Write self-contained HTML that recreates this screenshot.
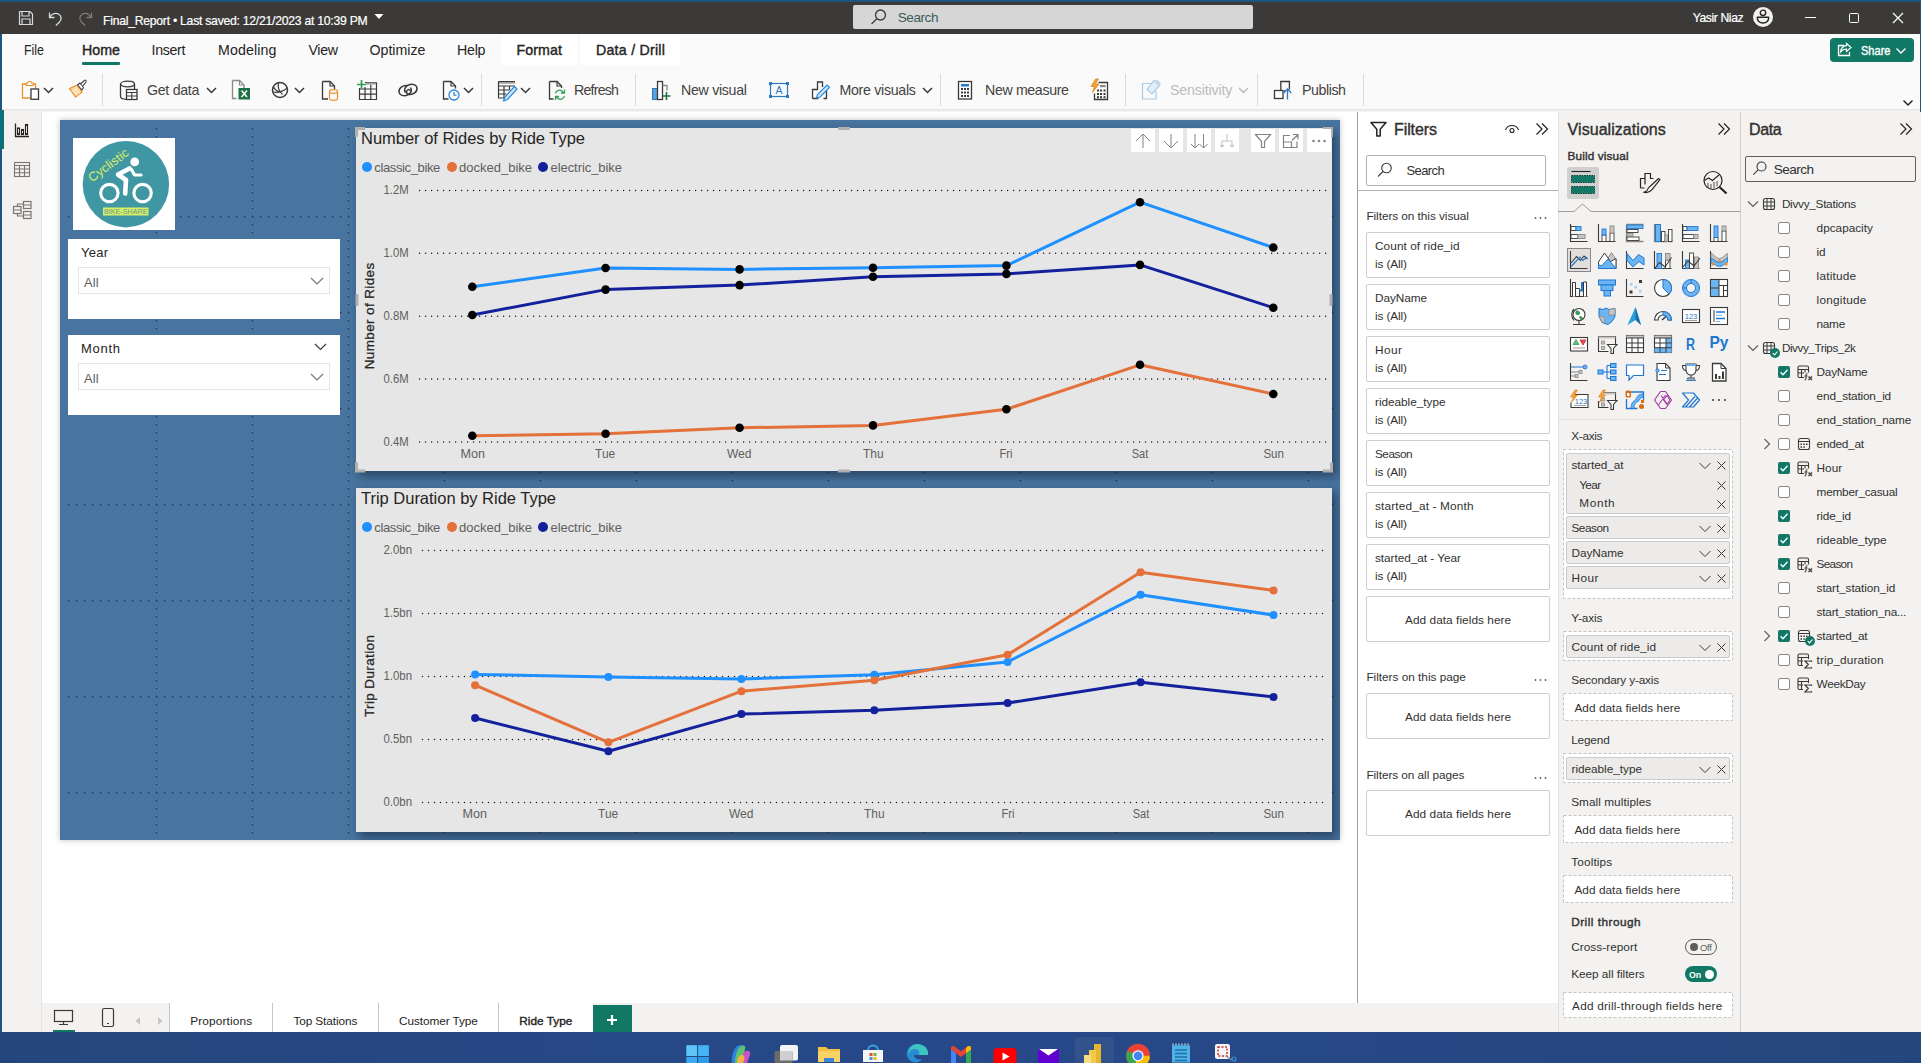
<!DOCTYPE html>
<html lang="en"><head><meta charset="utf-8"><title>Final_Report - Power BI Desktop</title>
<style>
html,body{margin:0;padding:0;background:#fff;}
body{width:1921px;height:1063px;position:relative;overflow:hidden;font-family:"Liberation Sans",sans-serif;}
.r{position:absolute;display:block;}
.t{position:absolute;white-space:nowrap;font-family:"Liberation Sans",sans-serif;}
svg{overflow:visible;}
</style></head><body>
<div class="r" style="left:0px;top:0px;width:1921px;height:1063px;background:#ffffff;"></div>
<div class="r" style="left:0px;top:0px;width:1921px;height:34px;background:#3b3a39;"></div>
<div class="r" style="left:0px;top:0px;width:1921px;height:2px;background:#1d5681;"></div>
<div class="r" style="left:0px;top:34px;width:1921px;height:76px;background:#fafafa;"></div>
<div class="r" style="left:0px;top:109px;width:1921px;height:3px;background:linear-gradient(#e3e3e3,#f6f6f6);"></div>
<div class="r" style="left:0px;top:111px;width:42px;height:921px;background:#f3f2f1;"></div>
<div class="r" style="left:41px;top:111px;width:1px;height:921px;background:#e6e5e4;"></div>
<div class="r" style="left:0px;top:34px;width:1.5px;height:998px;background:#1d5681;"></div>
<div class="r" style="left:0px;top:110px;width:4px;height:39px;background:#0f6f78;"></div>
<div class="r" style="left:42px;top:112px;width:1315px;height:891px;background:#ffffff;"></div>
<div class="t" style="left:103px;top:14px;font-size:12.2px;line-height:14px;color:#ffffff;letter-spacing:-0.249px;-webkit-text-stroke:0.2px #fff;">Final_Report • Last saved: 12/21/2023 at 10:39 PM</div>
<div class="r" style="left:853px;top:5px;width:400px;height:24px;background:#d6d6d6;border-radius:2px;"></div>
<div class="t" style="left:897.7px;top:10px;font-size:13.6px;line-height:15px;color:#3b5d58;letter-spacing:-0.462px;">Search</div>
<div class="t" style="left:1692.7px;top:11px;font-size:12.2px;line-height:14px;color:#ffffff;letter-spacing:-0.413px;-webkit-text-stroke:0.2px #fff;">Yasir Niaz</div>
<svg class="r" style="left:18px;top:10px;" width="16" height="16" viewBox="0 0 16 16"><path d="M1.5 1.5h10.5l2.5 2.5v10.5h-13z M4 1.5v4.5h7v-4.5 M4 14.5v-5.5h8v5.5" fill="none" stroke="#d8d8d8" stroke-width="1.2"/></svg>
<svg class="r" style="left:47px;top:10px;" width="18" height="16" viewBox="0 0 18 16"><path d="M2.5 2.5v5h5 M2.8 7.2c2-3.5 6-5 9-3c3 2 3 5.5 0.5 8l-3.5 3.3" fill="none" stroke="#d8d8d8" stroke-width="1.3"/></svg>
<svg class="r" style="left:76px;top:10px;" width="18" height="16" viewBox="0 0 18 16"><path d="M15.5 2.5v5h-5 M15.2 7.2c-2-3.5-6-5-9-3c-3 2-3 5.5-0.5 8l3.5 3.3" fill="none" stroke="#7d7c7b" stroke-width="1.3"/></svg>
<svg class="r" style="left:374px;top:13px;" width="10" height="8" viewBox="0 0 10 8"><path d="M0.5 1h9l-4.5 5z" fill="#ffffff"/></svg>
<svg class="r" style="left:870px;top:8px;" width="18" height="18" viewBox="0 0 18 18"><circle cx="10.5" cy="7" r="5" fill="none" stroke="#3a3a3a" stroke-width="1.3"/><path d="M7 10.5l-5.5 5.5" stroke="#3a3a3a" stroke-width="1.3"/></svg>
<svg class="r" style="left:1752px;top:6px;" width="22" height="22" viewBox="0 0 22 22"><circle cx="11" cy="11" r="10" fill="#f3f2f1"/><circle cx="11" cy="6.8" r="2.7" fill="none" stroke="#252423" stroke-width="1.4"/><path d="M5.3 11.3h11.4c0.3 3.5-2.3 5.7-5.7 5.7s-6-2.2-5.7-5.7z" fill="none" stroke="#252423" stroke-width="1.4" stroke-linejoin="round"/></svg>
<div class="r" style="left:1805px;top:17px;width:10.5px;height:1px;background:#ffffff;"></div>
<div class="r" style="left:1849px;top:13px;width:8px;height:8px;border:1px solid #ffffff;border-radius:1.5px;"></div>
<svg class="r" style="left:1892px;top:11.5px;" width="12" height="12" viewBox="0 0 12 12"><path d="M1 1l10 10M11 1l-10 10" stroke="#fff" stroke-width="1.2"/></svg>
<div class="r" style="left:1919.5px;top:2px;width:1.5px;height:1030px;background:#1d5681;"></div>
<div class="t" style="left:24px;top:42px;font-size:14.2px;line-height:16px;color:#252423;transform:scaleX(0.8748);transform-origin:0px 0;">File</div>
<div class="t" style="left:82px;top:42px;font-size:14.2px;line-height:16px;color:#252423;letter-spacing:0.029px;-webkit-text-stroke:0.4px #252423;">Home</div>
<div class="r" style="left:82px;top:62px;width:38px;height:3px;background:#117865;border-radius:1px;"></div>
<div class="t" style="left:151.5px;top:42px;font-size:14.2px;line-height:16px;color:#252423;letter-spacing:-0.3px;">Insert</div>
<div class="t" style="left:218px;top:42px;font-size:14.2px;line-height:16px;color:#252423;letter-spacing:0.121px;">Modeling</div>
<div class="t" style="left:308.5px;top:42px;font-size:14.2px;line-height:16px;color:#252423;letter-spacing:-0.343px;">View</div>
<div class="t" style="left:369.5px;top:42px;font-size:14.2px;line-height:16px;color:#252423;letter-spacing:-0.003px;">Optimize</div>
<div class="t" style="left:457px;top:42px;font-size:14.2px;line-height:16px;color:#252423;letter-spacing:-0.227px;">Help</div>
<div class="r" style="left:501px;top:34px;width:76px;height:31px;background:#ffffff;"></div>
<div class="r" style="left:580px;top:34px;width:100px;height:31px;background:#ffffff;"></div>
<div class="t" style="left:516.5px;top:42px;font-size:14.2px;line-height:16px;color:#252423;letter-spacing:0.111px;-webkit-text-stroke:0.4px #252423;">Format</div>
<div class="t" style="left:596px;top:42px;font-size:14.2px;line-height:16px;color:#252423;letter-spacing:0.244px;-webkit-text-stroke:0.4px #252423;">Data / Drill</div>
<div class="r" style="left:1830px;top:38px;width:84px;height:24px;background:#117865;border-radius:4px;"></div>
<div class="t" style="left:1861px;top:43px;font-size:13.2px;line-height:15px;color:#ffffff;transform:scaleX(0.837);transform-origin:0px 0;-webkit-text-stroke:0.4px #ffffff;">Share</div>
<svg class="r" style="left:1836px;top:42px;" width="18" height="16" viewBox="0 0 18 16"><path d="M8 3.5h-5.5v10h11v-3.5" fill="none" stroke="#fff" stroke-width="1.3"/><path d="M10.5 1.5l4.5 4-4.5 4v-2.5c-3 0-4.5 1-6 3c0.5-4 2.5-6 6-6.3z" fill="none" stroke="#fff" stroke-width="1.2"/></svg>
<svg class="r" style="left:1894.6px;top:47px;" width="12" height="8" viewBox="0 0 12 8"><path d="M1.5 1.5l4.5 4.5 4.5-4.5" fill="none" stroke="#fff" stroke-width="1.4"/></svg>
<svg class="r" style="left:1902px;top:99px;" width="12" height="8" viewBox="0 0 12 8"><path d="M1.5 1.5l4.5 4.5 4.5-4.5" fill="none" stroke="#252423" stroke-width="1.5"/></svg>
<div class="t" style="left:147px;top:82px;font-size:14.2px;line-height:16px;color:#444240;letter-spacing:-0.29px;">Get data</div>
<div class="t" style="left:574px;top:82px;font-size:14.2px;line-height:16px;color:#444240;letter-spacing:-0.783px;">Refresh</div>
<div class="t" style="left:681px;top:82px;font-size:14.2px;line-height:16px;color:#444240;letter-spacing:-0.295px;">New visual</div>
<div class="t" style="left:839.5px;top:82px;font-size:14.2px;line-height:16px;color:#444240;letter-spacing:-0.294px;">More visuals</div>
<div class="t" style="left:985px;top:82px;font-size:14.2px;line-height:16px;color:#444240;letter-spacing:-0.361px;">New measure</div>
<div class="t" style="left:1170px;top:82px;font-size:14.2px;line-height:16px;color:#bdbbb9;letter-spacing:-0.14px;">Sensitivity</div>
<div class="t" style="left:1302px;top:82px;font-size:14.2px;line-height:16px;color:#444240;letter-spacing:-0.429px;">Publish</div>
<div class="r" style="left:102px;top:74px;width:1px;height:32px;background:#dcdad8;"></div>
<div class="r" style="left:481px;top:74px;width:1px;height:32px;background:#dcdad8;"></div>
<div class="r" style="left:635px;top:74px;width:1px;height:32px;background:#dcdad8;"></div>
<div class="r" style="left:940px;top:74px;width:1px;height:32px;background:#dcdad8;"></div>
<div class="r" style="left:1125px;top:74px;width:1px;height:32px;background:#dcdad8;"></div>
<div class="r" style="left:1257px;top:74px;width:1px;height:32px;background:#dcdad8;"></div>
<div class="r" style="left:1363px;top:74px;width:1px;height:32px;background:#dcdad8;"></div>
<svg class="r" style="left:43px;top:87.3px;" width="11" height="7" viewBox="0 0 11 7"><path d="M1 1l4.5 4.5 4.5-4.5" fill="none" stroke="#3b3a39" stroke-width="1.5"/></svg>
<svg class="r" style="left:205.5px;top:87.3px;" width="11" height="7" viewBox="0 0 11 7"><path d="M1 1l4.5 4.5 4.5-4.5" fill="none" stroke="#3b3a39" stroke-width="1.5"/></svg>
<svg class="r" style="left:294px;top:87.3px;" width="11" height="7" viewBox="0 0 11 7"><path d="M1 1l4.5 4.5 4.5-4.5" fill="none" stroke="#3b3a39" stroke-width="1.5"/></svg>
<svg class="r" style="left:462.5px;top:87.3px;" width="11" height="7" viewBox="0 0 11 7"><path d="M1 1l4.5 4.5 4.5-4.5" fill="none" stroke="#3b3a39" stroke-width="1.5"/></svg>
<svg class="r" style="left:520px;top:87.3px;" width="11" height="7" viewBox="0 0 11 7"><path d="M1 1l4.5 4.5 4.5-4.5" fill="none" stroke="#3b3a39" stroke-width="1.5"/></svg>
<svg class="r" style="left:922px;top:87.3px;" width="11" height="7" viewBox="0 0 11 7"><path d="M1 1l4.5 4.5 4.5-4.5" fill="none" stroke="#3b3a39" stroke-width="1.5"/></svg>
<svg class="r" style="left:1237.5px;top:87.3px;" width="11" height="7" viewBox="0 0 11 7"><path d="M1 1l4.5 4.5 4.5-4.5" fill="none" stroke="#bdbbb9" stroke-width="1.5"/></svg>
<svg class="r" style="left:18px;top:78px;" width="24" height="24" viewBox="0 0 24 24"><path d="M8.5 6h-4v14h8M15 6h2.5v5" fill="none" stroke="#e8912d" stroke-width="1.3"/><path d="M8.3 7.5v-2.5h1.7c0-2.3 3.5-2.3 3.5 0h1.7v2.5z" fill="#fff" stroke="#e8912d" stroke-width="1.1"/><rect x="13" y="11" width="7.5" height="10.3" fill="#fff" stroke="#3b3a39" stroke-width="1.3"/></svg>
<svg class="r" style="left:66px;top:78px;" width="24" height="24" viewBox="0 0 24 24"><path d="M3.5 10.5l8-3.5 4.5 7-6.5 5z" fill="#fbd9a5" stroke="#e8912d" stroke-width="1.3" stroke-linejoin="round"/><path d="M6.5 12.5l5.5 5M9 10l4.5 6" stroke="#fff" stroke-width="0.7"/><path d="M11.5 7l2.5-2 3.5 4.5-1.5 2.5z" fill="#fff" stroke="#3b3a39" stroke-width="1.1" stroke-linejoin="round"/><path d="M15 5.5l3.5-3.2c0.8-0.7 2.2 0.4 1.6 1.4l-2.8 4" fill="#fff" stroke="#3b3a39" stroke-width="1.1"/></svg>
<svg class="r" style="left:115px;top:78px;" width="24" height="24" viewBox="0 0 24 24"><ellipse cx="12.5" cy="6" rx="7" ry="2.8" fill="none" stroke="#3b3a39" stroke-width="1.3"/><path d="M5.5 6v12.5c0 1.4 2.5 2.6 5.5 2.8M19.5 6v5" fill="none" stroke="#3b3a39" stroke-width="1.3"/><rect x="11.5" y="11.5" width="10.5" height="10" fill="#fff" stroke="#3b3a39" stroke-width="1.3"/><path d="M11.5 14.5h10.5M11.5 18h10.5M16.8 14.5v7" stroke="#3b3a39" stroke-width="1.1"/></svg>
<svg class="r" style="left:227px;top:78px;" width="24" height="24" viewBox="0 0 24 24"><path d="M5.5 2.5h7l4.5 4.5v3.5M5.5 2.5v18h4" fill="none" stroke="#8a8886" stroke-width="1.3"/><path d="M12.5 2.5v4.5h4.5" fill="none" stroke="#8a8886" stroke-width="1.2"/><rect x="11.5" y="10" width="11.5" height="11.5" fill="#1e7145"/><path d="M14.5 12.5l5.5 6.5M20 12.5l-5.5 6.5" stroke="#fff" stroke-width="1.5"/></svg>
<svg class="r" style="left:268px;top:78px;" width="24" height="24" viewBox="0 0 24 24"><circle cx="12" cy="12" r="7.5" fill="none" stroke="#3b3a39" stroke-width="1.5"/><path d="M5.5 9c2 4 5 5 8.5 4.5M10.5 5c-1 4 0.5 8 4 11.5M5 14c4 1 9 0 13.5-3.5" fill="none" stroke="#3b3a39" stroke-width="1.2"/></svg>
<svg class="r" style="left:317px;top:78px;" width="24" height="24" viewBox="0 0 24 24"><path d="M5.5 3.5h7.5l4.5 4.5v3M5.5 3.5v17.5h5.5" fill="none" stroke="#3b3a39" stroke-width="1.3"/><path d="M13 3.5v4.5h4.5" fill="none" stroke="#3b3a39" stroke-width="1.2"/><ellipse cx="16.5" cy="13.5" rx="4" ry="1.8" fill="#fff" stroke="#e8912d" stroke-width="1.2"/><path d="M12.5 13.5v7c0 1 1.8 1.8 4 1.8s4-0.8 4-1.8v-7" fill="none" stroke="#e8912d" stroke-width="1.2"/></svg>
<svg class="r" style="left:355px;top:78px;" width="24" height="24" viewBox="0 0 24 24"><path d="M10 4.5h11.5M4.5 10v11.5h17v-17M4.5 11h17M4.5 16.2h17M10 9v12.5M15.8 6.5v15" fill="none" stroke="#3b3a39" stroke-width="1.2"/><rect x="11" y="4.5" width="10" height="2" fill="#a19f9d"/><path d="M6.5 2v9M2 6.5h9" stroke="#2f9e57" stroke-width="1.7"/></svg>
<svg class="r" style="left:396px;top:78px;" width="24" height="24" viewBox="0 0 24 24"><path d="M9.5 14.5c-2-2.5-0.5-6 3-7.5c3.5-1.5 8-0.5 8.5 3c0.5 4-4 7-8 6.5c-2.5-0.5-3.5-3-1.5-4.5c1.5-1 3.5 0 3 1.5" fill="none" stroke="#3b3a39" stroke-width="1.5"/><path d="M14.5 9.5c2 2.5 0.5 6-3 7.5c-3.5 1.5-8 0.5-8.5-3c-0.5-4 4-7 8-6.5" fill="none" stroke="#3b3a39" stroke-width="1.5"/></svg>
<svg class="r" style="left:438px;top:78px;" width="24" height="24" viewBox="0 0 24 24"><path d="M5.5 3.5h7.5l4.5 4.5v2.5M5.5 3.5v17.5h5" fill="none" stroke="#3b3a39" stroke-width="1.3"/><path d="M13 3.5v4.5h4.5" fill="none" stroke="#3b3a39" stroke-width="1.2"/><circle cx="16" cy="17" r="5" fill="#fff" stroke="#2b88d8" stroke-width="1.3"/><path d="M16 14v3.2h2.5" fill="none" stroke="#2b88d8" stroke-width="1.2"/></svg>
<svg class="r" style="left:495px;top:78px;" width="24" height="24" viewBox="0 0 24 24"><rect x="3.5" y="3.5" width="16.5" height="2.2" fill="#a19f9d"/><path d="M3.5 3.5h16.5M3.5 3.5v16.5h7M3.5 8h16.5M3.5 12h11M3.5 16h8M9 8v12M14.5 8v4" fill="none" stroke="#3b3a39" stroke-width="1.2"/><path d="M19.5 8.5l2.5 2.5-9.5 10.5-4 1.5 1.5-4z" fill="#cfe4f7" stroke="#2b88d8" stroke-width="1.2" stroke-linejoin="round"/></svg>
<svg class="r" style="left:544px;top:78px;" width="24" height="24" viewBox="0 0 24 24"><path d="M5.5 3.5h7.5l4.5 4.5v2M5.5 3.5v17.5h4" fill="none" stroke="#3b3a39" stroke-width="1.3"/><path d="M13 3.5v4.5h4.5" fill="none" stroke="#3b3a39" stroke-width="1.2"/><path d="M11.5 15.5c0.5-3 4.5-4.5 7-2l1.5 1.5M20.5 11.5v3.5h-3.5M20.5 18c-0.8 3-4.8 4.5-7.2 2l-1.5-1.5M11.5 22v-3.5h3.5" fill="none" stroke="#3a9e5c" stroke-width="1.3"/></svg>
<svg class="r" style="left:648px;top:78px;" width="24" height="24" viewBox="0 0 24 24"><rect x="4.5" y="10.5" width="5" height="11" fill="#5ea0dc" stroke="#2b78c5" stroke-width="1"/><rect x="9.5" y="3.5" width="5" height="18" fill="#fff" stroke="#3b3a39" stroke-width="1.3"/><path d="M14.5 7.5h4.5v5" fill="none" stroke="#8a8886" stroke-width="1.3"/><path d="M18.5 14v8M14.5 18h8" stroke="#1e7145" stroke-width="1.6"/></svg>
<svg class="r" style="left:767px;top:78px;" width="24" height="24" viewBox="0 0 24 24"><rect x="3.5" y="5.5" width="17" height="13" fill="none" stroke="#2b78c5" stroke-width="1.2"/><rect x="2" y="4" width="3" height="3" fill="#2b78c5"/><rect x="19" y="4" width="3" height="3" fill="#2b78c5"/><rect x="2" y="17" width="3" height="3" fill="#2b78c5"/><rect x="19" y="17" width="3" height="3" fill="#2b78c5"/><text x="12" y="16" font-size="10.5" text-anchor="middle" fill="#2b78c5" font-family="Liberation Sans, sans-serif">A</text></svg>
<svg class="r" style="left:808px;top:78px;" width="24" height="24" viewBox="0 0 24 24"><path d="M4.5 20.5v-9h5v-7.5h5v5M4.5 20.5h6M14.5 13h4v7.5h-3" fill="none" stroke="#3b3a39" stroke-width="1.3"/><path d="M19 7l2.5 2.5-9.5 9.5-3.5 1 1-3.5z" fill="#cfe4f7" stroke="#2b88d8" stroke-width="1.2"/></svg>
<svg class="r" style="left:953px;top:78px;" width="24" height="24" viewBox="0 0 24 24"><rect x="5.5" y="3.5" width="13" height="17.5" fill="#fff" stroke="#3b3a39" stroke-width="1.3"/><rect x="8" y="6" width="8" height="2.5" fill="#2b78c5"/><g fill="#3b3a39"><rect x="8" y="10" width="2" height="2"/><rect x="11" y="10" width="2" height="2"/><rect x="14" y="10" width="2" height="2"/><rect x="8" y="13.5" width="2" height="2"/><rect x="11" y="13.5" width="2" height="2"/><rect x="14" y="13.5" width="2" height="2"/><rect x="8" y="17" width="2" height="2"/><rect x="11" y="17" width="2" height="2"/><rect x="14" y="17" width="2" height="2"/></g></svg>
<svg class="r" style="left:1088px;top:78px;" width="24" height="24" viewBox="0 0 24 24"><path d="M10.5 4.5h9v17h-13v-6" fill="none" stroke="#3b3a39" stroke-width="1.3"/><rect x="12" y="7" width="5.5" height="2.2" fill="#8a8886"/><g fill="#3b3a39"><rect x="9" y="11.5" width="2" height="2"/><rect x="12" y="11.5" width="2" height="2"/><rect x="15.5" y="11.5" width="2" height="2"/><rect x="9" y="15" width="2" height="2"/><rect x="12" y="15" width="2" height="2"/><rect x="15.5" y="15" width="2" height="2"/><rect x="9" y="18.2" width="2" height="2"/><rect x="12" y="18.2" width="2" height="2"/><rect x="15.5" y="18.2" width="2" height="2"/></g><path d="M7.5 1l-4.5 7.5h3.5l-2 6 6.5-8.5h-3.5l3-5z" fill="#f2a33a" stroke="#d87d0f" stroke-width="0.7"/></svg>
<svg class="r" style="left:1139px;top:78px;" width="24" height="24" viewBox="0 0 24 24"><path d="M12 5.5h-8.5v15.5h13.5v-8" fill="none" stroke="#a9cce9" stroke-width="1.2"/><path d="M15 2.5l5.5 5-7.5 8.5-5-4.5z M17 2l4.5 4" fill="#e4eef8" stroke="#a9cce9" stroke-width="1.2"/></svg>
<svg class="r" style="left:1271px;top:78px;" width="24" height="24" viewBox="0 0 24 24"><path d="M9.8 12v-8.5h8.6v8M13 13h1" fill="none" stroke="#3b3a39" stroke-width="1.3"/><rect x="3.5" y="12.5" width="8.5" height="8" fill="#fff" stroke="#3b3a39" stroke-width="1.3"/><path d="M16.5 21.5v-10M12.7 15l3.8-4 3.8 4" fill="none" stroke="#2b78c5" stroke-width="1.3"/></svg>
<svg class="r" style="left:0px;top:108px;" width="42" height="124" viewBox="0 0 42 124"><path d="M15.5 15.5v13h13.5" fill="none" stroke="#252423" stroke-width="1.3"/><rect x="17.5" y="20" width="2" height="6.5" fill="none" stroke="#252423" stroke-width="1.1"/><rect x="21.5" y="21.5" width="2" height="5" fill="none" stroke="#252423" stroke-width="1.1"/><rect x="25.5" y="16.5" width="2" height="10" fill="none" stroke="#252423" stroke-width="1.1"/><g fill="none" stroke="#797775" stroke-width="1.1"><rect x="14.5" y="54.5" width="15" height="14"/><path d="M14.5 57.5h15M14.5 61h15M14.5 64.7h15M19.5 57.5v11M24.5 57.5v11"/></g><g fill="none" stroke="#797775" stroke-width="1.2"><rect x="13.5" y="98.5" width="7.5" height="7"/><rect x="23.5" y="93.5" width="7.5" height="7"/><rect x="23.5" y="103.5" width="7.5" height="7"/><path d="M13.5 102h7.5M23.5 97h7.5M23.5 107h7.5M17.5 98.5v-2.5h6M17.5 105.5v2.5h6"/></g></svg>
<div class="r" style="left:60px;top:120px;width:1280px;height:720px;background:#48759f;box-shadow:0 0 6px rgba(0,0,0,0.25);"></div>
<svg class="r" style="left:60px;top:120px;" width="1280" height="720" viewBox="0 0 1280 720"><g stroke="#17345a" stroke-width="1.3" stroke-dasharray="1.2 6.8" fill="none"><path d="M96.5 8V720"/><path d="M192.5 8V720"/><path d="M288.5 8V720"/><path d="M384.5 8V720"/><path d="M480.5 8V720"/><path d="M576.5 8V720"/><path d="M672.5 8V720"/><path d="M768.5 8V720"/><path d="M864.5 8V720"/><path d="M960.5 8V720"/><path d="M1056.5 8V720"/><path d="M1152.5 8V720"/><path d="M1248.5 8V720"/><path d="M8 96.5H1280"/><path d="M8 192.5H1280"/><path d="M8 288.5H1280"/><path d="M8 384.5H1280"/><path d="M8 480.5H1280"/><path d="M8 576.5H1280"/><path d="M8 672.5H1280"/></g></svg>
<div class="r" style="left:60px;top:120px;width:1280px;height:720px;overflow:hidden;">
<div class="r" style="left:296px;top:8px;width:976px;height:343px;box-shadow:4px 5px 9px 1px rgba(10,20,40,0.45);"></div>
<div class="r" style="left:296px;top:368px;width:976px;height:344px;box-shadow:4px 5px 9px 1px rgba(10,20,40,0.45);"></div>
</div>
<div class="r" style="left:73px;top:138px;width:102px;height:92px;background:#ffffff;"></div>
<svg class="r" style="left:73px;top:138px;" width="102" height="92" viewBox="0 0 102 92"><circle cx="52.9" cy="46.2" r="43.2" fill="#3f97a4"/>
<circle cx="36.4" cy="55.1" r="8.7" fill="none" stroke="#fff" stroke-width="3.1"/>
<circle cx="69.6" cy="55.1" r="8.7" fill="none" stroke="#fff" stroke-width="3.1"/>
<circle cx="61.7" cy="23.9" r="4.4" fill="#fff"/>
<path d="M56.5 30.5l-11.5 6 8 5.5-0.8 13.5" fill="none" stroke="#fff" stroke-width="4.6" stroke-linecap="round" stroke-linejoin="round"/>
<path d="M58.5 31.5l3 5.5h6.5" fill="none" stroke="#fff" stroke-width="3.2" stroke-linecap="round" stroke-linejoin="round"/>
<rect x="30" y="69.5" width="45.5" height="8" fill="#d8ee66"/>
<text x="31" y="76.1" font-size="7.6" fill="#5a9b8e" font-family="Liberation Sans, sans-serif" textLength="43.5" lengthAdjust="spacingAndGlyphs">BIKE-SHARE</text>
<text transform="translate(19,44.5) rotate(-36.6)" font-size="12.5" fill="#d8ee66" font-family="Liberation Sans, sans-serif" textLength="47" lengthAdjust="spacingAndGlyphs">Cyclistic</text></svg>
<div class="r" style="left:68px;top:239px;width:272px;height:80px;background:#ffffff;"></div>
<div class="t" style="left:81px;top:245px;font-size:13px;line-height:15px;color:#252423;letter-spacing:0.247px;">Year</div>
<div class="r" style="left:78px;top:267px;width:252px;height:27px;background:#ffffff;border:1px solid #e6e6e6;box-sizing:border-box;"></div>
<div class="t" style="left:84px;top:275px;font-size:12.8px;line-height:15px;color:#605e5c;letter-spacing:0.146px;">All</div>
<svg class="r" style="left:310px;top:277px;" width="14" height="9" viewBox="0 0 14 9"><path d="M1 1l6 6 6-6" fill="none" stroke="#7a7876" stroke-width="1.2"/></svg>
<div class="r" style="left:68px;top:335px;width:272px;height:80px;background:#ffffff;"></div>
<div class="t" style="left:81px;top:341px;font-size:13px;line-height:15px;color:#252423;letter-spacing:0.715px;">Month</div>
<div class="r" style="left:78px;top:363px;width:252px;height:27px;background:#ffffff;border:1px solid #e6e6e6;box-sizing:border-box;"></div>
<div class="t" style="left:84px;top:371px;font-size:12.8px;line-height:15px;color:#605e5c;letter-spacing:0.146px;">All</div>
<svg class="r" style="left:310px;top:373px;" width="14" height="9" viewBox="0 0 14 9"><path d="M1 1l6 6 6-6" fill="none" stroke="#7a7876" stroke-width="1.2"/></svg>
<svg class="r" style="left:314px;top:343px;" width="13" height="8" viewBox="0 0 13 8"><path d="M1 1l5.5 5.5 5.5-5.5" fill="none" stroke="#3b3a39" stroke-width="1.2"/></svg>
<div class="r" style="left:356px;top:128px;width:976px;height:343px;background:#e6e6e6;"></div>
<div class="t" style="left:361px;top:129px;font-size:16.5px;line-height:18px;color:#252423;letter-spacing:-0.015px;">Number of Rides by Ride Type</div>
<div class="r" style="left:362px;top:162.3px;width:10px;height:10px;background:#1e90ff;border-radius:50%;"></div>
<div class="t" style="left:374.3px;top:160px;font-size:13px;line-height:15px;color:#605e5c;letter-spacing:-0.37px;">classic_bike</div>
<div class="r" style="left:447px;top:162.3px;width:10px;height:10px;background:#e4703a;border-radius:50%;"></div>
<div class="t" style="left:459px;top:160px;font-size:13px;line-height:15px;color:#605e5c;letter-spacing:0px;">docked_bike</div>
<div class="r" style="left:538px;top:162.3px;width:10px;height:10px;background:#14219c;border-radius:50%;"></div>
<div class="t" style="left:550.5px;top:160px;font-size:13px;line-height:15px;color:#605e5c;letter-spacing:-0.065px;">electric_bike</div>
<svg class="r" style="left:356px;top:128px;" width="976" height="343" viewBox="0 0 976 343"><g stroke="#1c1c1c" stroke-width="1.5" stroke-dasharray="0 6" stroke-linecap="round" fill="none"><path d="M63.6 62.4H971"/><path d="M63.6 125.3H971"/><path d="M63.6 188.2H971"/><path d="M63.6 251.1H971"/><path d="M63.6 314H971"/></g><path d="M116.3 158.8 L249.6 140 L383.6 141.4 L517 139.7 L650.4 137.6 L784 74.2 L917.3 119.5" fill="none" stroke="#1e90ff" stroke-width="3" stroke-linejoin="round"/><path d="M116.3 187 L249.6 161.6 L383.6 157.1 L517 148.7 L650.4 145.9 L784 136.9 L917.3 179.7" fill="none" stroke="#14219c" stroke-width="3" stroke-linejoin="round"/><path d="M116.3 307.8 L249.6 305.7 L383.6 299.8 L517 297.4 L650.4 281.3 L784 236.8 L917.3 266" fill="none" stroke="#e4703a" stroke-width="3" stroke-linejoin="round"/><circle cx="116.3" cy="158.8" r="4.3" fill="#000000"/><circle cx="249.6" cy="140" r="4.3" fill="#000000"/><circle cx="383.6" cy="141.4" r="4.3" fill="#000000"/><circle cx="517" cy="139.7" r="4.3" fill="#000000"/><circle cx="650.4" cy="137.6" r="4.3" fill="#000000"/><circle cx="784" cy="74.2" r="4.3" fill="#000000"/><circle cx="917.3" cy="119.5" r="4.3" fill="#000000"/><circle cx="116.3" cy="187" r="4.3" fill="#000000"/><circle cx="249.6" cy="161.6" r="4.3" fill="#000000"/><circle cx="383.6" cy="157.1" r="4.3" fill="#000000"/><circle cx="517" cy="148.7" r="4.3" fill="#000000"/><circle cx="650.4" cy="145.9" r="4.3" fill="#000000"/><circle cx="784" cy="136.9" r="4.3" fill="#000000"/><circle cx="917.3" cy="179.7" r="4.3" fill="#000000"/><circle cx="116.3" cy="307.8" r="4.3" fill="#000000"/><circle cx="249.6" cy="305.7" r="4.3" fill="#000000"/><circle cx="383.6" cy="299.8" r="4.3" fill="#000000"/><circle cx="517" cy="297.4" r="4.3" fill="#000000"/><circle cx="650.4" cy="281.3" r="4.3" fill="#000000"/><circle cx="784" cy="236.8" r="4.3" fill="#000000"/><circle cx="917.3" cy="266" r="4.3" fill="#000000"/></svg>
<div class="t" style="left:381.7px;top:183px;font-size:12px;line-height:14px;color:#605e5c;transform:scaleX(0.9438);transform-origin:26.7px 0;">1.2M</div>
<div class="t" style="left:381.7px;top:246px;font-size:12px;line-height:14px;color:#605e5c;transform:scaleX(0.9438);transform-origin:26.7px 0;">1.0M</div>
<div class="t" style="left:381.7px;top:309px;font-size:12px;line-height:14px;color:#605e5c;transform:scaleX(0.9438);transform-origin:26.7px 0;">0.8M</div>
<div class="t" style="left:381.7px;top:372px;font-size:12px;line-height:14px;color:#605e5c;transform:scaleX(0.9438);transform-origin:26.7px 0;">0.6M</div>
<div class="t" style="left:381.7px;top:435px;font-size:12px;line-height:14px;color:#605e5c;transform:scaleX(0.9438);transform-origin:26.7px 0;">0.4M</div>
<div class="t" style="left:460.63px;top:447px;font-size:12px;line-height:14px;color:#605e5c;transform:scaleX(1.0497);transform-origin:11.67px 0;">Mon</div>
<div class="t" style="left:595.49px;top:447px;font-size:12px;line-height:14px;color:#605e5c;transform:scaleX(0.9891);transform-origin:10.11px 0;">Tue</div>
<div class="t" style="left:727.36px;top:447px;font-size:12px;line-height:14px;color:#605e5c;transform:scaleX(1.0008);transform-origin:12.24px 0;">Wed</div>
<div class="t" style="left:862.65px;top:447px;font-size:12px;line-height:14px;color:#605e5c;transform:scaleX(0.9903);transform-origin:10.35px 0;">Thu</div>
<div class="t" style="left:999.41px;top:447px;font-size:12px;line-height:14px;color:#605e5c;transform:scaleX(0.9299);transform-origin:6.99px 0;">Fri</div>
<div class="t" style="left:1131px;top:447px;font-size:12px;line-height:14px;color:#605e5c;transform:scaleX(0.9167);transform-origin:9px 0;">Sat</div>
<div class="t" style="left:1262.62px;top:447px;font-size:12px;line-height:14px;color:#605e5c;transform:scaleX(0.9597);transform-origin:10.68px 0;">Sun</div>
<div class="r" style="left:373.7px;top:315.5px;width:0;height:0;transform:rotate(-90deg);">
<div class="t" style="left:-53.25px;top:-12px;font-size:13.5px;line-height:15px;color:#252423;letter-spacing:0.37px;-webkit-text-stroke:0.25px #252423;">Number of Rides</div>
</div>
<div class="r" style="left:356px;top:488px;width:976px;height:344px;background:#e6e6e6;"></div>
<div class="t" style="left:361px;top:489px;font-size:16.5px;line-height:18px;color:#252423;letter-spacing:-0.014px;">Trip Duration by Ride Type</div>
<div class="r" style="left:362px;top:522.2px;width:10px;height:10px;background:#1e90ff;border-radius:50%;"></div>
<div class="t" style="left:374.3px;top:520px;font-size:13px;line-height:15px;color:#605e5c;letter-spacing:-0.37px;">classic_bike</div>
<div class="r" style="left:447px;top:522.2px;width:10px;height:10px;background:#e4703a;border-radius:50%;"></div>
<div class="t" style="left:459px;top:520px;font-size:13px;line-height:15px;color:#605e5c;letter-spacing:0px;">docked_bike</div>
<div class="r" style="left:538px;top:522.2px;width:10px;height:10px;background:#14219c;border-radius:50%;"></div>
<div class="t" style="left:550.5px;top:520px;font-size:13px;line-height:15px;color:#605e5c;letter-spacing:-0.065px;">electric_bike</div>
<svg class="r" style="left:356px;top:488px;" width="976" height="344" viewBox="0 0 976 344"><g stroke="#1c1c1c" stroke-width="1.5" stroke-dasharray="0 6" stroke-linecap="round" fill="none"><path d="M66.5 62.5H968"/><path d="M66.5 125.5H968"/><path d="M66.5 188.5H968"/><path d="M66.5 251.5H968"/><path d="M66.5 314.5H968"/></g><path d="M119.1 186.4 L252.4 189 L385.4 191 L518.3 186.8 L651.6 173.9 L784.6 106.7 L917.5 127.1" fill="none" stroke="#1e90ff" stroke-width="3" stroke-linejoin="round"/><path d="M119.1 197.2 L252.4 254.3 L385.4 203.2 L518.3 192.2 L651.6 166.8 L784.6 84.2 L917.5 102.4" fill="none" stroke="#e4703a" stroke-width="3" stroke-linejoin="round"/><path d="M119.1 230 L252.4 263.3 L385.4 226.1 L518.3 222.2 L651.6 215 L784.6 194.3 L917.5 209" fill="none" stroke="#14219c" stroke-width="3" stroke-linejoin="round"/><circle cx="119.1" cy="186.4" r="4" fill="#1e90ff"/><circle cx="252.4" cy="189" r="4" fill="#1e90ff"/><circle cx="385.4" cy="191" r="4" fill="#1e90ff"/><circle cx="518.3" cy="186.8" r="4" fill="#1e90ff"/><circle cx="651.6" cy="173.9" r="4" fill="#1e90ff"/><circle cx="784.6" cy="106.7" r="4" fill="#1e90ff"/><circle cx="917.5" cy="127.1" r="4" fill="#1e90ff"/><circle cx="119.1" cy="197.2" r="4" fill="#e4703a"/><circle cx="252.4" cy="254.3" r="4" fill="#e4703a"/><circle cx="385.4" cy="203.2" r="4" fill="#e4703a"/><circle cx="518.3" cy="192.2" r="4" fill="#e4703a"/><circle cx="651.6" cy="166.8" r="4" fill="#e4703a"/><circle cx="784.6" cy="84.2" r="4" fill="#e4703a"/><circle cx="917.5" cy="102.4" r="4" fill="#e4703a"/><circle cx="119.1" cy="230" r="4" fill="#14219c"/><circle cx="252.4" cy="263.3" r="4" fill="#14219c"/><circle cx="385.4" cy="226.1" r="4" fill="#14219c"/><circle cx="518.3" cy="222.2" r="4" fill="#14219c"/><circle cx="651.6" cy="215" r="4" fill="#14219c"/><circle cx="784.6" cy="194.3" r="4" fill="#14219c"/><circle cx="917.5" cy="209" r="4" fill="#14219c"/></svg>
<div class="t" style="left:381.94px;top:543px;font-size:12px;line-height:14px;color:#605e5c;transform:scaleX(0.9514);transform-origin:30.06px 0;">2.0bn</div>
<div class="t" style="left:381.94px;top:606px;font-size:12px;line-height:14px;color:#605e5c;transform:scaleX(0.9514);transform-origin:30.06px 0;">1.5bn</div>
<div class="t" style="left:381.94px;top:669px;font-size:12px;line-height:14px;color:#605e5c;transform:scaleX(0.9514);transform-origin:30.06px 0;">1.0bn</div>
<div class="t" style="left:381.94px;top:732px;font-size:12px;line-height:14px;color:#605e5c;transform:scaleX(0.9514);transform-origin:30.06px 0;">0.5bn</div>
<div class="t" style="left:381.94px;top:795px;font-size:12px;line-height:14px;color:#605e5c;transform:scaleX(0.9514);transform-origin:30.06px 0;">0.0bn</div>
<div class="t" style="left:463.43px;top:807px;font-size:12px;line-height:14px;color:#605e5c;transform:scaleX(1.0497);transform-origin:11.67px 0;">Mon</div>
<div class="t" style="left:598.29px;top:807px;font-size:12px;line-height:14px;color:#605e5c;transform:scaleX(0.9891);transform-origin:10.11px 0;">Tue</div>
<div class="t" style="left:729.16px;top:807px;font-size:12px;line-height:14px;color:#605e5c;transform:scaleX(1.0008);transform-origin:12.24px 0;">Wed</div>
<div class="t" style="left:863.95px;top:807px;font-size:12px;line-height:14px;color:#605e5c;transform:scaleX(0.9903);transform-origin:10.35px 0;">Thu</div>
<div class="t" style="left:1000.61px;top:807px;font-size:12px;line-height:14px;color:#605e5c;transform:scaleX(0.9299);transform-origin:6.99px 0;">Fri</div>
<div class="t" style="left:1131.6px;top:807px;font-size:12px;line-height:14px;color:#605e5c;transform:scaleX(0.9167);transform-origin:9px 0;">Sat</div>
<div class="t" style="left:1262.82px;top:807px;font-size:12px;line-height:14px;color:#605e5c;transform:scaleX(0.9597);transform-origin:10.68px 0;">Sun</div>
<div class="r" style="left:373.7px;top:675.5px;width:0;height:0;transform:rotate(-90deg);">
<div class="t" style="left:-41px;top:-12px;font-size:13.5px;line-height:15px;color:#252423;letter-spacing:0.37px;-webkit-text-stroke:0.25px #252423;">Trip Duration</div>
</div>
<svg class="r" style="left:0px;top:0px;pointer-events:none;" width="1921" height="1063" viewBox="0 0 1921 1063"><path d="M355 128.5h10M356.5 127v10" stroke="#b0b0b0" stroke-width="3" fill="none"/><path d="M1333 128.5h-10M1331.5 127v10" stroke="#b0b0b0" stroke-width="3" fill="none"/><path d="M355 471h10M356.5 472.5v-10" stroke="#b0b0b0" stroke-width="3" fill="none"/><path d="M1333 471h-10M1331.5 472.5v-10" stroke="#b0b0b0" stroke-width="3" fill="none"/><path d="M838 128.5h12" stroke="#b0b0b0" stroke-width="3"/><path d="M838 471h12" stroke="#b0b0b0" stroke-width="3"/><path d="M357 294v12" stroke="#b0b0b0" stroke-width="3"/><path d="M1331 294v12" stroke="#b0b0b0" stroke-width="3"/></svg>
<div class="r" style="left:1131px;top:129px;width:24px;height:23px;background:#ffffff;"></div>
<svg class="r" style="left:1131px;top:129px;" width="24" height="23" viewBox="0 0 24 23"><path d="M12 5v14M5 12l7-7 7 7" fill="none" stroke="#858381" stroke-width="1"/></svg>
<div class="r" style="left:1159px;top:129px;width:24px;height:23px;background:#ffffff;"></div>
<svg class="r" style="left:1159px;top:129px;" width="24" height="23" viewBox="0 0 24 23"><path d="M12 5v14M5 12l7 7 7-7" fill="none" stroke="#858381" stroke-width="1"/></svg>
<div class="r" style="left:1187px;top:129px;width:24px;height:23px;background:#ffffff;"></div>
<svg class="r" style="left:1187px;top:129px;" width="24" height="23" viewBox="0 0 24 23"><path d="M8 5v14M4 15l4 4 4-4M16.5 5v14M12.5 15l4 4 4-4" fill="none" stroke="#858381" stroke-width="1"/></svg>
<div class="r" style="left:1215px;top:129px;width:24px;height:23px;background:#ffffff;"></div>
<svg class="r" style="left:1215px;top:129px;" width="24" height="23" viewBox="0 0 24 23"><path d="M12 5v7M7 18v-6h10v6M5 16l2 2 2-2M15 16l2 2 2-2" fill="none" stroke="#c8c6c4" stroke-width="1.1"/></svg>
<div class="r" style="left:1251px;top:129px;width:24px;height:23px;background:#ffffff;"></div>
<svg class="r" style="left:1251px;top:129px;" width="24" height="23" viewBox="0 0 24 23"><path d="M4.5 5.5h15l-6 7v6h-3v-6z" fill="none" stroke="#858381" stroke-width="1.2"/></svg>
<div class="r" style="left:1279px;top:129px;width:24px;height:23px;background:#ffffff;"></div>
<svg class="r" style="left:1279px;top:129px;" width="24" height="23" viewBox="0 0 24 23"><path d="M11 6.5h-6.5v12h13.5v-6M4.5 13h8v5.5M14 5.5h5v5M19 5.5l-6 6" fill="none" stroke="#858381" stroke-width="1.2"/></svg>
<div class="r" style="left:1307px;top:129px;width:24px;height:23px;background:#ffffff;"></div>
<svg class="r" style="left:1307px;top:129px;" width="24" height="23" viewBox="0 0 24 23"><circle cx="6.5" cy="12" r="1.3" fill="#858381"/><circle cx="12" cy="12" r="1.3" fill="#858381"/><circle cx="17.5" cy="12" r="1.3" fill="#858381"/></svg>
<div class="r" style="left:42px;top:1003px;width:1315px;height:29px;background:#f3f2f1;"></div>
<div class="r" style="left:170px;top:1003px;width:423px;height:29px;background:#ffffff;"></div>
<div class="r" style="left:169px;top:1003px;width:1px;height:29px;background:#c8c6c4;"></div>
<div class="r" style="left:272px;top:1003px;width:1px;height:29px;background:#c8c6c4;"></div>
<div class="r" style="left:378px;top:1003px;width:1px;height:29px;background:#c8c6c4;"></div>
<div class="r" style="left:498px;top:1003px;width:1px;height:29px;background:#c8c6c4;"></div>
<div class="t" style="left:190.2px;top:1014px;font-size:11.8px;line-height:14px;color:#252423;letter-spacing:0.164px;">Proportions</div>
<div class="t" style="left:293.4px;top:1014px;font-size:11.8px;line-height:14px;color:#252423;letter-spacing:-0.087px;">Top Stations</div>
<div class="t" style="left:399px;top:1014px;font-size:11.8px;line-height:14px;color:#252423;letter-spacing:-0.081px;">Customer Type</div>
<div class="t" style="left:519.3px;top:1014px;font-size:11.8px;line-height:14px;color:#252423;letter-spacing:0.01px;-webkit-text-stroke:0.4px #252423;">Ride Type</div>
<div class="r" style="left:593px;top:1005px;width:38.5px;height:27px;background:#117865;"></div>
<svg class="r" style="left:605px;top:1013px;" width="14" height="14" viewBox="0 0 14 14"><path d="M7 2v10M2 7h10" stroke="#fff" stroke-width="2.2"/></svg>
<svg class="r" style="left:53px;top:1009px;" width="22" height="18" viewBox="0 0 22 18"><rect x="1.5" y="1.5" width="18" height="11" fill="none" stroke="#3b3a39" stroke-width="1.2"/><path d="M10.5 12.5v3M6 15.5h9" stroke="#3b3a39" stroke-width="1.2"/></svg>
<div class="r" style="left:53px;top:1030px;width:22px;height:2px;background:#117865;"></div>
<svg class="r" style="left:101px;top:1007px;" width="14" height="22" viewBox="0 0 14 22"><rect x="1.5" y="1.5" width="11" height="18" rx="1.5" fill="none" stroke="#3b3a39" stroke-width="1.2"/><path d="M6 16.5h2" stroke="#3b3a39" stroke-width="1.2"/></svg>
<svg class="r" style="left:134px;top:1016px;" width="8" height="10" viewBox="0 0 8 10"><path d="M6 1l-4.5 4 4.5 4z" fill="#c8c6c4"/></svg>
<svg class="r" style="left:156px;top:1016px;" width="8" height="10" viewBox="0 0 8 10"><path d="M2 1l4.5 4-4.5 4z" fill="#c8c6c4"/></svg>
<div class="r" style="left:0px;top:1032px;width:1921px;height:31px;background:#26487f;background:linear-gradient(90deg,#25467d,#27498a 50%,#25467d);"></div>
<svg class="r" style="left:684px;top:1042px;" width="26" height="21" viewBox="0 0 26 21"><rect x="2.3" y="3.2" width="10.8" height="10.8" fill="#5cc6fa"/><rect x="14.1" y="3.2" width="10.8" height="10.8" fill="#45b4f4"/><rect x="2.3" y="15" width="10.8" height="6" fill="#3aa9f0"/><rect x="14.1" y="15" width="10.8" height="6" fill="#2f9be8"/></svg>
<svg class="r" style="left:728px;top:1042px;" width="26" height="21" viewBox="0 0 26 21"><path d="M4 21c-1-4 1-14 5-17c2-1.5 7-1.5 8 0c1 2-2 11-4 17z" fill="#2f7fe0"/><path d="M7 21c0-8 3-16 6-17c3-1 5 0 4 3l-4 14z" fill="#5ec36a"/><path d="M13 21c0-6 2-11 5-12c3-1 5 1 4 4l-3 8z" fill="#c655c8"/><path d="M9 21c0-5 2-8 5-8c2 0 3 2 2 5l-1 3z" fill="#f2b441"/></svg>
<svg class="r" style="left:773px;top:1042px;" width="26" height="21" viewBox="0 0 26 21"><rect x="7" y="3" width="18" height="15.5" rx="2" fill="#f4f4f4"/><rect x="1.5" y="9" width="18" height="12" rx="1.5" fill="#6b6b6b"/><rect x="7" y="9" width="12.5" height="9.5" fill="#cfcfcf"/></svg>
<svg class="r" style="left:816px;top:1042px;" width="26" height="21" viewBox="0 0 26 21"><path d="M2 5h8l2 2h12v13h-22z" fill="#f5c042"/><path d="M2 9h22v11h-22z" fill="#fad265"/><rect x="8" y="16" width="10" height="4" fill="#3a86d9"/></svg>
<svg class="r" style="left:860px;top:1042px;" width="26" height="21" viewBox="0 0 26 21"><path d="M3 8h20v12h-20z" fill="#f4f4f4"/><path d="M8 8c0-6 10-6 10 0" fill="none" stroke="#39a0dd" stroke-width="1.8"/><rect x="9.5" y="11" width="3" height="3" fill="#e8472f"/><rect x="13.5" y="11" width="3" height="3" fill="#77b83a"/><rect x="9.5" y="15" width="3" height="3" fill="#2e9be6"/><rect x="13.5" y="15" width="3" height="3" fill="#f5b91d"/></svg>
<svg class="r" style="left:904px;top:1042px;" width="26" height="21" viewBox="0 0 26 21"><path d="M13 2c7 0 12 5 11 11h-14c0 3 3 5 8 4c-2 3-6 4-9 3c-5-2-7-6-6-10c1-5 5-8 10-8z" fill="#2a8ad4"/><path d="M13 2c7 0 12 5 11 11h-9c1-4-1-6-4-6c-3 0-6 2-7 6c0-6 4-11 9-11z" fill="#3cc4c0"/></svg>
<svg class="r" style="left:948px;top:1042px;" width="26" height="21" viewBox="0 0 26 21"><path d="M3 7.5l10 7.5 10-7.5v-1.5c0-1.5-2-2.5-3.5-1.5l-6.5 5-6.5-5c-1.5-1-3.5 0-3.5 1.5z" fill="#ea4335"/><path d="M3 7.5v13.5h5v-9.8z" fill="#4285f4"/><path d="M23 7.5v13.5h-5v-9.8z" fill="#34a853"/><path d="M18 5.8l2-1.5c1.5-1 3 0 3 1.7v1.5l-5 3.7z" fill="#fbbc05"/></svg>
<svg class="r" style="left:992px;top:1042px;" width="26" height="21" viewBox="0 0 26 21"><rect x="1.5" y="6" width="23" height="17" rx="4" fill="#ff0000"/><path d="M10.5 10.5l7 4-7 4z" fill="#fff"/></svg>
<svg class="r" style="left:1036px;top:1042px;" width="26" height="21" viewBox="0 0 26 21"><rect x="2" y="7" width="21" height="15" fill="#6001d2"/><path d="M3 7l9.5 6.5 9.5-6.5z" fill="#fff"/></svg>
<div class="r" style="left:1074.5px;top:1037px;width:39px;height:26px;background:#31528b;border-radius:4px 4px 0 0;"></div>
<svg class="r" style="left:1080px;top:1042px;" width="26" height="21" viewBox="0 0 26 21"><rect x="14" y="2" width="7" height="19" fill="#e5b52e"/><rect x="9" y="8" width="7" height="13" fill="#f2c94c"/><rect x="4" y="13" width="7" height="8" fill="#f7dc7d"/></svg>
<svg class="r" style="left:1125px;top:1042px;" width="26" height="21" viewBox="0 0 26 21"><circle cx="13" cy="13.8" r="12" fill="#e94335"/><path d="M13 13.8l-10.8-5c-2.5 7 0 13 7 16.5z" fill="#34a853"/><path d="M13 13.8l-4 11.5c7 1.5 14-2 16-9.5l-1-2z" fill="#fbbc05"/><circle cx="13" cy="13.8" r="5.6" fill="#fff"/><circle cx="13" cy="13.8" r="4.4" fill="#4285f4"/></svg>
<svg class="r" style="left:1168px;top:1042px;" width="26" height="21" viewBox="0 0 26 21"><rect x="4" y="3.5" width="18" height="17" fill="#4fb3e8"/><path d="M7 8h12M7 11.5h12M7 15h12M7 18.5h12" stroke="#1f6fa5" stroke-width="1.4"/><path d="M5 3.5v-2M8 3.5v-2M11 3.5v-2M14 3.5v-2M17 3.5v-2M20 3.5v-2" stroke="#bfe3f7" stroke-width="1.2"/></svg>
<svg class="r" style="left:1212px;top:1042px;" width="26" height="21" viewBox="0 0 26 21"><rect x="3" y="2" width="15" height="15" rx="2" fill="#f4f4f4"/><rect x="6" y="5" width="9" height="9" fill="none" stroke="#c4372b" stroke-width="1.5" stroke-dasharray="2 1.5"/><path d="M14 14l6 4" stroke="#8a8a8a" stroke-width="1.5"/><circle cx="22" cy="17" r="2" fill="none" stroke="#3f8fd6" stroke-width="1.2"/></svg>
<div class="r" style="left:1357px;top:112px;width:201px;height:891px;background:#ffffff;"></div>
<div class="r" style="left:1357px;top:1003px;width:201px;height:29px;background:#f3f2f1;"></div>
<div class="r" style="left:1357px;top:112px;width:1px;height:891px;background:#a19f9d;"></div>
<svg class="r" style="left:1369px;top:120px;" width="19" height="19" viewBox="0 0 19 19"><path d="M2 2.5h15l-5.8 6.8v6.7h-3.4v-6.7z" fill="none" stroke="#252423" stroke-width="1.5" stroke-linejoin="round"/></svg>
<div class="t" style="left:1394px;top:121px;font-size:16px;line-height:17px;color:#323130;letter-spacing:-0.087px;-webkit-text-stroke:0.4px #323130;">Filters</div>
<svg class="r" style="left:1504px;top:123px;" width="16" height="12" viewBox="0 0 16 12"><path d="M1.5 7c2-6 11-6 13 0" fill="none" stroke="#252423" stroke-width="1.1"/><circle cx="8" cy="7.5" r="2" fill="none" stroke="#252423" stroke-width="1.1"/></svg>
<svg class="r" style="left:1534.5px;top:122px;" width="14" height="14" viewBox="0 0 14 14"><path d="M1.5 1.5l5.5 5.5-5.5 5.5M7 1.5l5.5 5.5-5.5 5.5" fill="none" stroke="#252423" stroke-width="1.2"/></svg>
<div class="r" style="left:1366px;top:155px;width:180px;height:31px;background:#ffffff;border:1px solid #b3b0ad;box-sizing:border-box;border-radius:2px;"></div>
<svg class="r" style="left:1376px;top:161px;" width="18" height="18" viewBox="0 0 18 18"><circle cx="10.5" cy="7" r="4.8" fill="none" stroke="#3b3a39" stroke-width="1.1"/><path d="M7 10.5l-5 5" stroke="#3b3a39" stroke-width="1.1"/></svg>
<div class="t" style="left:1406.4px;top:163px;font-size:13px;line-height:15px;color:#323130;letter-spacing:-0.582px;">Search</div>
<div class="r" style="left:1358px;top:190px;width:200px;height:1px;background:#b3b0ad;"></div>
<div class="t" style="left:1366.4px;top:209px;font-size:11.8px;line-height:14px;color:#323130;letter-spacing:-0.053px;">Filters on this visual</div>
<svg class="r" style="left:1534px;top:216px;" width="13" height="4" viewBox="0 0 13 4"><circle cx="1.5" cy="2" r="0.9" fill="#605e5c"/><circle cx="6.5" cy="2" r="0.9" fill="#605e5c"/><circle cx="11.5" cy="2" r="0.9" fill="#605e5c"/></svg>
<div class="r" style="left:1366px;top:232px;width:184px;height:46px;background:#ffffff;border:1px solid #d0cecc;box-sizing:border-box;border-radius:2px;"></div>
<div class="t" style="left:1375px;top:239px;font-size:11.8px;line-height:14px;color:#323130;letter-spacing:0.079px;">Count of ride_id</div>
<div class="t" style="left:1375px;top:257px;font-size:11.8px;line-height:14px;color:#323130;letter-spacing:-0.115px;">is (All)</div>
<div class="r" style="left:1366px;top:284px;width:184px;height:46px;background:#ffffff;border:1px solid #d0cecc;box-sizing:border-box;border-radius:2px;"></div>
<div class="t" style="left:1375px;top:291px;font-size:11.8px;line-height:14px;color:#323130;letter-spacing:-0.075px;">DayName</div>
<div class="t" style="left:1375px;top:309px;font-size:11.8px;line-height:14px;color:#323130;letter-spacing:-0.115px;">is (All)</div>
<div class="r" style="left:1366px;top:336px;width:184px;height:46px;background:#ffffff;border:1px solid #d0cecc;box-sizing:border-box;border-radius:2px;"></div>
<div class="t" style="left:1375px;top:343px;font-size:11.8px;line-height:14px;color:#323130;letter-spacing:0.465px;">Hour</div>
<div class="t" style="left:1375px;top:361px;font-size:11.8px;line-height:14px;color:#323130;letter-spacing:-0.115px;">is (All)</div>
<div class="r" style="left:1366px;top:388px;width:184px;height:46px;background:#ffffff;border:1px solid #d0cecc;box-sizing:border-box;border-radius:2px;"></div>
<div class="t" style="left:1375px;top:395px;font-size:11.8px;line-height:14px;color:#323130;letter-spacing:-0.03px;">rideable_type</div>
<div class="t" style="left:1375px;top:413px;font-size:11.8px;line-height:14px;color:#323130;letter-spacing:-0.115px;">is (All)</div>
<div class="r" style="left:1366px;top:440px;width:184px;height:46px;background:#ffffff;border:1px solid #d0cecc;box-sizing:border-box;border-radius:2px;"></div>
<div class="t" style="left:1375px;top:447px;font-size:11.8px;line-height:14px;color:#323130;letter-spacing:-0.5px;">Season</div>
<div class="t" style="left:1375px;top:465px;font-size:11.8px;line-height:14px;color:#323130;letter-spacing:-0.115px;">is (All)</div>
<div class="r" style="left:1366px;top:492px;width:184px;height:46px;background:#ffffff;border:1px solid #d0cecc;box-sizing:border-box;border-radius:2px;"></div>
<div class="t" style="left:1375px;top:499px;font-size:11.8px;line-height:14px;color:#323130;letter-spacing:0.161px;">started_at - Month</div>
<div class="t" style="left:1375px;top:517px;font-size:11.8px;line-height:14px;color:#323130;letter-spacing:-0.115px;">is (All)</div>
<div class="r" style="left:1366px;top:544px;width:184px;height:46px;background:#ffffff;border:1px solid #d0cecc;box-sizing:border-box;border-radius:2px;"></div>
<div class="t" style="left:1375px;top:551px;font-size:11.8px;line-height:14px;color:#323130;letter-spacing:-0.038px;">started_at - Year</div>
<div class="t" style="left:1375px;top:569px;font-size:11.8px;line-height:14px;color:#323130;letter-spacing:-0.115px;">is (All)</div>
<div class="r" style="left:1366px;top:596px;width:184px;height:46px;background:#ffffff;border:1px solid #d0cecc;box-sizing:border-box;border-radius:2px;"></div>
<div class="t" style="left:1405px;top:613px;font-size:11.8px;line-height:14px;color:#323130;letter-spacing:0.065px;">Add data fields here</div>
<div class="t" style="left:1366.4px;top:670px;font-size:11.8px;line-height:14px;color:#323130;letter-spacing:-0.011px;">Filters on this page</div>
<svg class="r" style="left:1534px;top:678px;" width="13" height="4" viewBox="0 0 13 4"><circle cx="1.5" cy="2" r="0.9" fill="#605e5c"/><circle cx="6.5" cy="2" r="0.9" fill="#605e5c"/><circle cx="11.5" cy="2" r="0.9" fill="#605e5c"/></svg>
<div class="r" style="left:1366px;top:693px;width:184px;height:46px;background:#ffffff;border:1px solid #d0cecc;box-sizing:border-box;border-radius:2px;"></div>
<div class="t" style="left:1405px;top:710px;font-size:11.8px;line-height:14px;color:#323130;letter-spacing:0.065px;">Add data fields here</div>
<div class="t" style="left:1366.4px;top:768px;font-size:11.8px;line-height:14px;color:#323130;letter-spacing:-0.056px;">Filters on all pages</div>
<svg class="r" style="left:1534px;top:775.5px;" width="13" height="4" viewBox="0 0 13 4"><circle cx="1.5" cy="2" r="0.9" fill="#605e5c"/><circle cx="6.5" cy="2" r="0.9" fill="#605e5c"/><circle cx="11.5" cy="2" r="0.9" fill="#605e5c"/></svg>
<div class="r" style="left:1366px;top:790px;width:184px;height:46px;background:#ffffff;border:1px solid #d0cecc;box-sizing:border-box;border-radius:2px;"></div>
<div class="t" style="left:1405px;top:807px;font-size:11.8px;line-height:14px;color:#323130;letter-spacing:0.065px;">Add data fields here</div>
<div class="r" style="left:1558px;top:112px;width:182px;height:920px;background:#f3f2f1;"></div>
<div class="r" style="left:1558px;top:112px;width:1px;height:920px;background:#e1dfdd;"></div>
<div class="t" style="left:1567.6px;top:121px;font-size:16px;line-height:17px;color:#323130;letter-spacing:0.052px;-webkit-text-stroke:0.4px #323130;">Visualizations</div>
<svg class="r" style="left:1717px;top:122px;" width="14" height="14" viewBox="0 0 14 14"><path d="M1.5 1.5l5.5 5.5-5.5 5.5M7 1.5l5.5 5.5-5.5 5.5" fill="none" stroke="#252423" stroke-width="1.2"/></svg>
<div class="t" style="left:1567.6px;top:149px;font-size:11.8px;line-height:14px;color:#323130;letter-spacing:0.117px;-webkit-text-stroke:0.4px #323130;">Build visual</div>
<div class="r" style="left:1567px;top:167px;width:32px;height:32px;background:#d2d0ce;border-radius:2px;"></div>
<svg class="r" style="left:1567px;top:167px;" width="32" height="32" viewBox="0 0 32 32"><path d="M4.5 4.5h19" stroke="#252423" stroke-width="1.1"/><rect x="4.5" y="8.5" width="23" height="7" fill="#117865" stroke="#0b3d33" stroke-width="1" stroke-dasharray="1.5 1"/><rect x="4.5" y="19.5" width="23" height="7" fill="#117865" stroke="#0b3d33" stroke-width="1" stroke-dasharray="1.5 1"/></svg>
<svg class="r" style="left:1637px;top:170px;" width="26" height="26" viewBox="0 0 26 26"><path d="M3.5 18v-9.5h4.5v-5h5.5v5h3M3.5 18h4M8 8.5v6" fill="none" stroke="#252423" stroke-width="1.2"/><path d="M21.5 8.5l1.5 1.2-8 10c-2 2.5-5 3.5-8.5 2.5c3-0.5 4-1.5 4.5-3.5c0.3-1 1-1.8 2-2.2z" fill="#f3f2f1" stroke="#252423" stroke-width="1.1" stroke-linejoin="round"/></svg>
<svg class="r" style="left:1701px;top:169px;" width="28" height="28" viewBox="0 0 28 28"><circle cx="12" cy="11.5" r="9" fill="none" stroke="#252423" stroke-width="1.2"/><path d="M18.5 18l7 6.5" stroke="#252423" stroke-width="2.2"/><path d="M3.5 11.5l4-2.5 4 2.5 6.5-5.5" fill="none" stroke="#252423" stroke-width="1.1"/><path d="M7 14v4.5M10 15v5M13 13v6.5M16 12v5.5" stroke="#605e5c" stroke-width="1.1"/></svg>
<svg class="r" style="left:1558px;top:202px;" width="182" height="12" viewBox="0 0 182 12"><path d="M0 9.5h16l8.5-7.5 8.5 7.5h149" fill="none" stroke="#a19f9d" stroke-width="1"/></svg>
<div class="r" style="left:1567px;top:248px;width:24px;height:24px;background:#e1dfdd;border:1px solid #8a8886;box-sizing:border-box;"></div>
<svg class="r" style="left:1568.8px;top:222.5px;" width="20" height="20" viewBox="0 0 20 20"><path d="M1.5 1v17.5h17" fill="none" stroke="#3b3a39" stroke-width="1.1"/><rect x="2" y="3.5" width="5" height="4" fill="#fff" stroke="#3b3a39" stroke-width="0.9"/><rect x="7" y="3.5" width="5" height="4" fill="#6cb4f2" stroke="#1f77d0" stroke-width="0.9"/><rect x="2" y="11.5" width="7" height="4" fill="#fff" stroke="#3b3a39" stroke-width="0.9"/><rect x="9" y="11.5" width="7" height="4" fill="#c8c6c4" stroke="#8a8886" stroke-width="0.9"/></svg>
<svg class="r" style="left:1596.8px;top:222.5px;" width="20" height="20" viewBox="0 0 20 20"><path d="M1.5 1v17.5h17" fill="none" stroke="#3b3a39" stroke-width="1.1"/><rect x="5" y="12" width="4" height="6.5" fill="#fff" stroke="#3b3a39" stroke-width="0.9"/><rect x="5" y="6" width="4" height="6" fill="#6cb4f2" stroke="#1f77d0" stroke-width="0.9"/><rect x="13" y="10" width="4" height="8.5" fill="#fff" stroke="#3b3a39" stroke-width="0.9"/><rect x="13" y="3" width="4" height="7" fill="#c8c6c4" stroke="#8a8886" stroke-width="0.9"/></svg>
<svg class="r" style="left:1624.8px;top:222.5px;" width="20" height="20" viewBox="0 0 20 20"><path d="M1.5 1.5h17M1.5 1.5v17h17" fill="none" stroke="#8a8886" stroke-width="1.3"/><rect x="2" y="2" width="16" height="3.5" fill="#6cb4f2" stroke="#1f77d0" stroke-width="0.9"/><rect x="2" y="6.5" width="11" height="3" fill="#fff" stroke="#3b3a39" stroke-width="0.9"/><rect x="2" y="10.5" width="6" height="2.5" fill="#c8c6c4" stroke="#8a8886" stroke-width="0.8"/><rect x="2" y="14" width="12" height="3.5" fill="#fff" stroke="#3b3a39" stroke-width="0.9"/></svg>
<svg class="r" style="left:1652.8px;top:222.5px;" width="20" height="20" viewBox="0 0 20 20"><path d="M1.5 1v17.5h18" fill="none" stroke="#8a8886" stroke-width="1.3"/><rect x="2.5" y="1.5" width="5" height="17" fill="#6cb4f2" stroke="#1f77d0" stroke-width="1"/><rect x="8.5" y="8.5" width="3.5" height="10" fill="#fff" stroke="#3b3a39" stroke-width="0.9"/><rect x="12" y="12" width="3" height="6.5" fill="#c8c6c4" stroke="#8a8886" stroke-width="0.8"/><rect x="15.5" y="6.5" width="3.5" height="12" fill="#fff" stroke="#3b3a39" stroke-width="0.9"/></svg>
<svg class="r" style="left:1680.8px;top:222.5px;" width="20" height="20" viewBox="0 0 20 20"><path d="M1.5 1v17.5h17" fill="none" stroke="#3b3a39" stroke-width="1.1"/><rect x="2" y="3.5" width="4" height="4" fill="#fff" stroke="#3b3a39" stroke-width="0.9"/><rect x="6" y="3.5" width="11" height="4" fill="#6cb4f2" stroke="#1f77d0" stroke-width="0.9"/><rect x="2" y="11.5" width="11" height="4" fill="#fff" stroke="#3b3a39" stroke-width="0.9"/><rect x="13" y="11.5" width="4" height="4" fill="#c8c6c4" stroke="#8a8886" stroke-width="0.9"/></svg>
<svg class="r" style="left:1708.8px;top:222.5px;" width="20" height="20" viewBox="0 0 20 20"><path d="M1.5 1v17.5h17" fill="none" stroke="#3b3a39" stroke-width="1.1"/><rect x="5" y="14.5" width="4" height="4" fill="#fff" stroke="#3b3a39" stroke-width="0.9"/><rect x="5" y="3" width="4" height="11.5" fill="#6cb4f2" stroke="#1f77d0" stroke-width="0.9"/><rect x="13" y="8" width="4" height="10.5" fill="#fff" stroke="#3b3a39" stroke-width="0.9"/><rect x="13" y="3" width="4" height="5" fill="#c8c6c4" stroke="#8a8886" stroke-width="0.9"/></svg>
<svg class="r" style="left:1568.8px;top:250.4px;" width="20" height="20" viewBox="0 0 20 20"><path d="M1.5 1v17.5h17" fill="none" stroke="#3b3a39" stroke-width="1.1"/><path d="M2 13l5.5-6.5 4 4 3.5-4.5 3.5 3" fill="none" stroke="#3b3a39" stroke-width="1.1"/><path d="M2 16.5l9-9.5 3 3.5 4-3.5" fill="none" stroke="#1f77d0" stroke-width="1.1"/></svg>
<svg class="r" style="left:1596.8px;top:250.4px;" width="20" height="20" viewBox="0 0 20 20"><path d="M11 8l3.5-5.5 4.5 7v9h-8z" fill="#c8c6c4" stroke="#8a8886" stroke-width="0.9"/><path d="M1.5 12l6-9 6 8.5 5.5-3v10h-17.5z" fill="#fff" stroke="#3b3a39" stroke-width="1"/><path d="M1.5 18.5v-4l3 1.5 6.5-7 8 9.5z" fill="#6cb4f2" stroke="#1f77d0" stroke-width="1"/></svg>
<svg class="r" style="left:1624.8px;top:250.4px;" width="20" height="20" viewBox="0 0 20 20"><path d="M1.5 1v17.5h17" fill="none" stroke="#3b3a39" stroke-width="1.1"/><path d="M2 3.5l6 7 5.5-6 5.5 3.5v7l-5-3.5-6 5.5-6-6.5z" fill="#6cb4f2" stroke="#1f77d0" stroke-width="1"/></svg>
<svg class="r" style="left:1652.8px;top:250.4px;" width="20" height="20" viewBox="0 0 20 20"><path d="M1.5 1v17.5h17" fill="none" stroke="#3b3a39" stroke-width="1.1"/><rect x="4" y="3.5" width="4.5" height="15" fill="#6cb4f2" stroke="#1f77d0" stroke-width="0.9"/><rect x="12.5" y="10" width="4.5" height="8.5" fill="#fff" stroke="#3b3a39" stroke-width="0.9"/><rect x="12.5" y="3.5" width="4.5" height="6.5" fill="#c8c6c4" stroke="#8a8886" stroke-width="0.9"/><path d="M2 18l4.5-5.5 5.5 4.5 6.5-9.5" fill="none" stroke="#3b3a39" stroke-width="1.1"/></svg>
<svg class="r" style="left:1680.8px;top:250.4px;" width="20" height="20" viewBox="0 0 20 20"><path d="M1.5 1v17.5h17" fill="none" stroke="#3b3a39" stroke-width="1.1"/><rect x="4.5" y="10" width="4" height="8.5" fill="#6cb4f2" stroke="#1f77d0" stroke-width="0.9"/><rect x="8.5" y="3" width="4" height="15.5" fill="#fff" stroke="#3b3a39" stroke-width="0.9"/><rect x="13.5" y="7" width="4" height="11.5" fill="#c8c6c4" stroke="#8a8886" stroke-width="0.9"/><path d="M2 17l5-6 6 5 6-8" fill="none" stroke="#3b3a39" stroke-width="1.1"/></svg>
<svg class="r" style="left:1708.8px;top:250.4px;" width="20" height="20" viewBox="0 0 20 20"><path d="M1.5 1v17.5h17" fill="none" stroke="#3b3a39" stroke-width="1.1"/><path d="M2 3.5c3 0 4.5 5 8.5 5s5-4.5 8-5v4.5c-3 0.5-4 4.5-8 4.5s-5.5-4-8.5-4z" fill="#c8c6c4" stroke="#8a8886" stroke-width="0.8"/><path d="M2 8.5c3 0 4.5 4 8.5 4s5-4 8-4.5v4.5c-3 0.5-4 4-8 4s-5.5-3.5-8.5-3.5z" fill="#6cb4f2" stroke="#1f77d0" stroke-width="0.8"/><rect x="2.5" y="12.5" width="2.5" height="3" fill="#e8912d"/><rect x="15.5" y="12.5" width="3" height="3" fill="#e8912d"/><circle cx="10.5" cy="10.5" r="1.3" fill="#e8912d"/></svg>
<svg class="r" style="left:1568.8px;top:278.3px;" width="20" height="20" viewBox="0 0 20 20"><path d="M1.5 1v17.5h17" fill="none" stroke="#3b3a39" stroke-width="1.1"/><path d="M3.5 18.5v-14h3v14M6.5 10.5h4v8M14.5 18.5v-14.5h3v14.5" fill="#fff" stroke="#3b3a39" stroke-width="1"/><path d="M10.5 12.5h2.5v-8.5" fill="none" stroke="#1f77d0" stroke-width="2"/></svg>
<svg class="r" style="left:1596.8px;top:278.3px;" width="20" height="20" viewBox="0 0 20 20"><rect x="1.5" y="2" width="17" height="5" fill="#6cb4f2" stroke="#1f77d0" stroke-width="1"/><rect x="4" y="7" width="12" height="5.5" fill="#6cb4f2" stroke="#1f77d0" stroke-width="1"/><rect x="7" y="12.5" width="6.5" height="5.5" fill="#6cb4f2" stroke="#1f77d0" stroke-width="1"/></svg>
<svg class="r" style="left:1624.8px;top:278.3px;" width="20" height="20" viewBox="0 0 20 20"><path d="M1.5 1v17.5h17" fill="none" stroke="#3b3a39" stroke-width="1.1"/><rect x="14" y="2" width="3" height="3" fill="#3b3a39"/><rect x="4.5" y="12.5" width="3" height="3" fill="#3b3a39"/><rect x="5" y="5" width="2.5" height="2.5" fill="#a9cff0"/><rect x="9.5" y="8" width="2.5" height="2.5" fill="#a9cff0"/><rect x="14" y="12" width="2.5" height="2.5" fill="#a9cff0"/></svg>
<svg class="r" style="left:1652.8px;top:278.3px;" width="20" height="20" viewBox="0 0 20 20"><circle cx="10" cy="10" r="8.5" fill="#fff" stroke="#3b3a39" stroke-width="1.1"/><path d="M10 1.5a8.5 8.5 0 0 1 6 14.5l-6-6z" fill="#6cb4f2" stroke="#1f77d0" stroke-width="1"/></svg>
<svg class="r" style="left:1680.8px;top:278.3px;" width="20" height="20" viewBox="0 0 20 20"><circle cx="10" cy="10" r="6.5" fill="none" stroke="#6cb4f2" stroke-width="4"/><circle cx="10" cy="10" r="8.5" fill="none" stroke="#1f77d0" stroke-width="1"/><circle cx="10" cy="10" r="4.5" fill="none" stroke="#1f77d0" stroke-width="1"/><path d="M2 10h4M10 1.5v4" stroke="#1f77d0" stroke-width="1"/></svg>
<svg class="r" style="left:1708.8px;top:278.3px;" width="20" height="20" viewBox="0 0 20 20"><rect x="1.5" y="1.5" width="17" height="17" fill="#fff" stroke="#3b3a39" stroke-width="1.1"/><rect x="2" y="2" width="8" height="8" fill="#6cb4f2"/><rect x="2" y="10" width="8" height="8" fill="#6cb4f2"/><path d="M10 1.5v17M1.5 10h8.5M10 7.5h8.5M14.5 7.5v11M14.5 12.5h4" stroke="#3b3a39" stroke-width="1" fill="none"/></svg>
<svg class="r" style="left:1568.8px;top:306.2px;" width="20" height="20" viewBox="0 0 20 20"><circle cx="10" cy="8.5" r="6" fill="#fff" stroke="#3b3a39" stroke-width="1.1"/><path d="M7 5c2-1 3 0 4 1.5s-1 3-3 2.5-2-3-1-4zM11 10c1.5 0 3 1 2.5 2.5s-2.5 1.5-3 0 0-2.5 0.5-2.5z" fill="#2f9e57"/><path d="M5 3c-3 3-3 8 0 11.5M4 18.5h12M10 15v3.5" fill="none" stroke="#3b3a39" stroke-width="1.1"/></svg>
<svg class="r" style="left:1596.8px;top:306.2px;" width="20" height="20" viewBox="0 0 20 20"><path d="M2 2.5l4 1 3-1.5 3 1.5 6-1v8l-3 5-4 3-6-2-3-6z" fill="#6cb4f2" stroke="#1f77d0" stroke-width="1"/><path d="M12 3.5l6-1v6l-6 1z" fill="#c8c6c4" stroke="#8a8886" stroke-width="0.8"/><path d="M2 10l5 1 1 6-3-1z" fill="#c8c6c4" stroke="#8a8886" stroke-width="0.8"/></svg>
<svg class="r" style="left:1624.8px;top:306.2px;" width="20" height="20" viewBox="0 0 20 20"><path d="M10.5 1l5.5 18-5.5-5-8 5z" fill="#2a9fd8"/><path d="M10.5 1l5.5 18-5.5-5z" fill="#1a6fb5"/></svg>
<svg class="r" style="left:1652.8px;top:306.2px;" width="20" height="20" viewBox="0 0 20 20"><path d="M1.5 14a8.5 8.5 0 0 1 17 0h-3.5a5 5 0 0 0-10 0z" fill="#fff" stroke="#3b3a39" stroke-width="1.1"/><path d="M10 5.5a8.5 8.5 0 0 1 8.5 8.5h-3.5a5 5 0 0 0-5-5z" fill="#6cb4f2" stroke="#1f77d0" stroke-width="1"/><path d="M9 14l4-3.5" stroke="#3b3a39" stroke-width="1.6"/></svg>
<svg class="r" style="left:1680.8px;top:306.2px;" width="20" height="20" viewBox="0 0 20 20"><rect x="1.5" y="3.5" width="17" height="13" fill="#fff" stroke="#3b3a39" stroke-width="1.1"/><text x="10" y="12.5" font-size="7.5" text-anchor="middle" fill="#1f77d0" font-family="Liberation Sans, sans-serif">123</text><path d="M4 14.5h12" stroke="#8a8886" stroke-width="0.8"/></svg>
<svg class="r" style="left:1708.8px;top:306.2px;" width="20" height="20" viewBox="0 0 20 20"><rect x="1.5" y="1.5" width="17" height="17" fill="#fff" stroke="#3b3a39" stroke-width="1.1"/><path d="M5 4v12" stroke="#3b3a39" stroke-width="1"/><path d="M7 6h9M7 12.5h9" stroke="#1f77d0" stroke-width="1.6"/><path d="M7 9.2h6M7 15.5h4" stroke="#6cb4f2" stroke-width="1.1"/></svg>
<svg class="r" style="left:1568.8px;top:334.1px;" width="20" height="20" viewBox="0 0 20 20"><rect x="1.5" y="3.5" width="17" height="13.5" fill="#fff" stroke="#3b3a39" stroke-width="1.1"/><path d="M4 10.5l3-5 3 5z" fill="#6bbf73" stroke="#2f9e57" stroke-width="0.8"/><path d="M11 6l3 5 3-5z" fill="#e8525a" stroke="#c4262e" stroke-width="0.8"/><path d="M4 14h12" stroke="#8a8886" stroke-width="0.9"/></svg>
<svg class="r" style="left:1596.8px;top:334.1px;" width="20" height="20" viewBox="0 0 20 20"><path d="M1.5 2.5h17v8M1.5 2.5v15h10" fill="none" stroke="#3b3a39" stroke-width="1.1"/><rect x="1.5" y="2.5" width="17" height="2" fill="#c8c6c4"/><rect x="4.5" y="7" width="3" height="3" fill="#c8c6c4" stroke="#8a8886" stroke-width="0.8"/><rect x="4.5" y="12.5" width="3" height="3" fill="#c8c6c4" stroke="#8a8886" stroke-width="0.8"/><path d="M10.5 10.5h9.5l-3.5 4v5h-2.5v-5z" fill="#fff" stroke="#3b3a39" stroke-width="1.1"/></svg>
<svg class="r" style="left:1624.8px;top:334.1px;" width="20" height="20" viewBox="0 0 20 20"><rect x="1.5" y="1.5" width="17" height="17" fill="#fff" stroke="#3b3a39" stroke-width="1.1"/><rect x="1.5" y="1.5" width="17" height="2.5" fill="#c8c6c4"/><path d="M1.5 4h17M1.5 9h17M1.5 13.7h17M7 4v14.5M13 4v14.5" stroke="#3b3a39" stroke-width="1" fill="none"/></svg>
<svg class="r" style="left:1652.8px;top:334.1px;" width="20" height="20" viewBox="0 0 20 20"><rect x="1.5" y="1.5" width="17" height="17" fill="#fff" stroke="#3b3a39" stroke-width="1.1"/><rect x="13" y="4" width="5.5" height="14.5" fill="#6cb4f2"/><rect x="1.5" y="13.7" width="17" height="4.8" fill="#6cb4f2"/><rect x="1.5" y="1.5" width="17" height="2.5" fill="#c8c6c4"/><path d="M1.5 4h17M1.5 9h17M1.5 13.7h17M7 4v14.5M13 4v14.5" stroke="#3b3a39" stroke-width="1" fill="none"/></svg>
<svg class="r" style="left:1680.8px;top:334.1px;" width="20" height="20" viewBox="0 0 20 20"><text x="9.5" y="16" font-size="16" font-weight="700" text-anchor="middle" textLength="9" lengthAdjust="spacingAndGlyphs" fill="#1f77d0" font-family="Liberation Sans, sans-serif">R</text></svg>
<svg class="r" style="left:1708.8px;top:334.1px;" width="20" height="20" viewBox="0 0 20 20"><text x="0.5" y="14" font-size="16.5" font-weight="700" fill="#1f77d0" font-family="Liberation Sans, sans-serif" textLength="19" lengthAdjust="spacingAndGlyphs">Py</text></svg>
<svg class="r" style="left:1568.8px;top:362px;" width="20" height="20" viewBox="0 0 20 20"><path d="M1.5 1v17.5h17" fill="none" stroke="#3b3a39" stroke-width="1.1"/><path d="M2 5h12" stroke="#1f77d0" stroke-width="1"/><circle cx="16" cy="5" r="2" fill="#6cb4f2" stroke="#1f77d0" stroke-width="0.9"/><path d="M2 10h8M2 14h4" stroke="#8a8886" stroke-width="1"/><rect x="10" y="8.5" width="3" height="3" fill="#c8c6c4" stroke="#8a8886" stroke-width="0.8"/><rect x="6" y="12.5" width="3" height="3" fill="#c8c6c4" stroke="#8a8886" stroke-width="0.8"/></svg>
<svg class="r" style="left:1596.8px;top:362px;" width="20" height="20" viewBox="0 0 20 20"><rect x="1" y="8" width="5" height="4" fill="#6cb4f2" stroke="#1f77d0" stroke-width="1"/><rect x="13.5" y="1.5" width="5.5" height="4" fill="#6cb4f2" stroke="#1f77d0" stroke-width="1"/><rect x="13.5" y="8" width="5.5" height="4" fill="#6cb4f2" stroke="#1f77d0" stroke-width="1"/><rect x="13.5" y="14.5" width="5.5" height="4" fill="#6cb4f2" stroke="#1f77d0" stroke-width="1"/><path d="M6 10h7.5M10 3.5v13M10 3.5h3.5M10 16.5h3.5" fill="none" stroke="#1f77d0" stroke-width="1.1"/></svg>
<svg class="r" style="left:1624.8px;top:362px;" width="20" height="20" viewBox="0 0 20 20"><path d="M1.5 3h17v10.5h-10l-4.5 4.5v-4.5h-2.5z" fill="#fff" stroke="#1f77d0" stroke-width="1.2"/></svg>
<svg class="r" style="left:1652.8px;top:362px;" width="20" height="20" viewBox="0 0 20 20"><path d="M4 1.5h8.5l4.5 4.5v12.5h-13z" fill="#fff" stroke="#3b3a39" stroke-width="1.1"/><path d="M12.5 1.5v4.5h4.5" fill="none" stroke="#3b3a39" stroke-width="1"/><circle cx="4.5" cy="8.5" r="1.7" fill="#6cb4f2" stroke="#1f77d0" stroke-width="0.8"/><path d="M8 8.5h6M6 12.5h7" stroke="#1f77d0" stroke-width="1"/></svg>
<svg class="r" style="left:1680.8px;top:362px;" width="20" height="20" viewBox="0 0 20 20"><path d="M5 2h10v6c0 3-2 5-5 5s-5-2-5-5zM5 3.5h-3.5c0 3 1.5 5 4 5.5M15 3.5h3.5c0 3-1.5 5-4 5.5M10 13v3M6 18.5h8l-1-2.5h-6z" fill="#fff" stroke="#3b3a39" stroke-width="1.1"/><rect x="5" y="2" width="10" height="2" fill="#6cb4f2"/><rect x="6" y="17" width="8" height="1.5" fill="#6cb4f2"/></svg>
<svg class="r" style="left:1708.8px;top:362px;" width="20" height="20" viewBox="0 0 20 20"><path d="M3.5 1.5h8.5l5 5v12.5h-13.5z" fill="#fff" stroke="#3b3a39" stroke-width="1.3"/><path d="M12 1.5v5h5" fill="none" stroke="#3b3a39" stroke-width="1"/><rect x="6" y="12" width="2" height="5" fill="#3b3a39"/><rect x="9.5" y="14" width="2" height="3" fill="#3b3a39"/><rect x="13" y="9.5" width="2" height="7.5" fill="#3b3a39"/></svg>
<svg class="r" style="left:1568.8px;top:389.9px;" width="20" height="20" viewBox="0 0 20 20"><path d="M6 4.5h13v13h-17v-5" fill="#fff" stroke="#3b3a39" stroke-width="1.1"/><text x="12" y="13.5" font-size="7.5" text-anchor="middle" fill="#1f77d0" font-family="Liberation Sans, sans-serif">123</text><path d="M5 15.5h12" stroke="#8a8886" stroke-width="0.8"/><path d="M6 0l-4.5 7h3l-2 5.5 6-7.5h-3l3-5z" fill="#f2a33a" stroke="#d87d0f" stroke-width="0.6"/></svg>
<svg class="r" style="left:1596.8px;top:389.9px;" width="20" height="20" viewBox="0 0 20 20"><path d="M6 2.5h12.5v8M1.5 11v6.5h10" fill="none" stroke="#3b3a39" stroke-width="1.1"/><rect x="7" y="2.5" width="11.5" height="2" fill="#c8c6c4"/><rect x="4.5" y="8" width="3" height="3" fill="#c8c6c4" stroke="#8a8886" stroke-width="0.8"/><rect x="4.5" y="13" width="3" height="3" fill="#c8c6c4" stroke="#8a8886" stroke-width="0.8"/><path d="M10.5 10.5h9.5l-3.5 4v5h-2.5v-5z" fill="#fff" stroke="#3b3a39" stroke-width="1.1"/><path d="M6 0l-4.5 7h3l-2 5.5 6-7.5h-3l3-5z" fill="#f2a33a" stroke="#d87d0f" stroke-width="0.6"/></svg>
<svg class="r" style="left:1624.8px;top:389.9px;" width="20" height="20" viewBox="0 0 20 20"><path d="M6 2h12.5v9M1.5 9v9.5h11" fill="none" stroke="#1f77d0" stroke-width="1.3"/><path d="M9 18.5c0-5 2-6 4-7s1.5-4 5-4.5v-3c-5 0-6 3-7 5s-5 2-5 9.5z" fill="#6cb4f2" stroke="#1f77d0" stroke-width="0.8"/><rect x="0.5" y="0.5" width="5.5" height="7" rx="1.5" fill="#d96c0f"/><rect x="2" y="3" width="2.5" height="3" fill="#fff"/><circle cx="16.5" cy="16.5" r="2.5" fill="#d96c0f"/><rect x="16" y="10" width="3" height="3" fill="#d96c0f"/></svg>
<svg class="r" style="left:1652.8px;top:389.9px;" width="20" height="20" viewBox="0 0 20 20"><path d="M7.5 1.5l-6 8.5 6 8.5h5l6-8.5-6-8.5z" fill="none" stroke="#a13fa8" stroke-width="1.2" stroke-linejoin="round"/><path d="M8 5.5l6.5 9M12.5 5l-7 10M10.5 10l3.5-4.5 3 4.5-3 4.5z" fill="none" stroke="#a13fa8" stroke-width="1.1" stroke-linejoin="round"/></svg>
<svg class="r" style="left:1680.8px;top:389.9px;" width="20" height="20" viewBox="0 0 20 20"><path d="M1.5 3h11l6 7-6 7h-11l6-7zM4.5 17l9.5-10.5M8.5 17l8-9" fill="none" stroke="#1f77d0" stroke-width="1.2" stroke-linejoin="round"/></svg>
<svg class="r" style="left:1708.8px;top:389.9px;" width="20" height="20" viewBox="0 0 20 20"><circle cx="4" cy="10" r="1" fill="#3b3a39"/><circle cx="10" cy="10" r="1" fill="#3b3a39"/><circle cx="16" cy="10" r="1" fill="#3b3a39"/></svg>
<div class="r" style="left:1558px;top:418.5px;width:182px;height:1px;background:#e1dfdd;"></div>
<div class="t" style="left:1571.2px;top:429px;font-size:11.8px;line-height:14px;color:#323130;letter-spacing:-0.301px;">X-axis</div>
<svg class="r" style="left:1563px;top:449px;" width="170" height="150" viewBox="0 0 170 150"><rect x="0.5" y="0.5" width="169" height="149" fill="#ffffff" stroke="#c6c4c2" stroke-width="1" stroke-dasharray="3 2"/></svg>
<div class="r" style="left:1566px;top:453px;width:164px;height:61px;background:#edebe9;border:1px solid #cdcbc9;box-sizing:border-box;border-radius:2px;"></div>
<div class="t" style="left:1571.5px;top:458px;font-size:11.8px;line-height:14px;color:#323130;letter-spacing:-0.05px;">started_at</div>
<svg class="r" style="left:1699px;top:462px;" width="12" height="8" viewBox="0 0 12 8"><path d="M0.5 1l5.5 5.5 5.5-5.5" fill="none" stroke="#3b3a39" stroke-width="1"/></svg>
<svg class="r" style="left:1716.5px;top:461px;" width="9" height="9" viewBox="0 0 9 9"><path d="M0.5 0.5l8 8M8.5 0.5l-8 8" fill="none" stroke="#3b3a39" stroke-width="1"/></svg>
<div class="t" style="left:1579.2px;top:478px;font-size:11.8px;line-height:14px;color:#323130;letter-spacing:-0.612px;">Year</div>
<svg class="r" style="left:1716.5px;top:480.5px;" width="9" height="9" viewBox="0 0 9 9"><path d="M0.5 0.5l8 8M8.5 0.5l-8 8" fill="none" stroke="#3b3a39" stroke-width="1"/></svg>
<div class="t" style="left:1579.2px;top:496px;font-size:11.8px;line-height:14px;color:#323130;letter-spacing:0.674px;">Month</div>
<svg class="r" style="left:1716.5px;top:499.5px;" width="9" height="9" viewBox="0 0 9 9"><path d="M0.5 0.5l8 8M8.5 0.5l-8 8" fill="none" stroke="#3b3a39" stroke-width="1"/></svg>
<div class="r" style="left:1566px;top:516px;width:164px;height:23px;background:#edebe9;border:1px solid #cdcbc9;box-sizing:border-box;border-radius:2px;"></div>
<div class="t" style="left:1571.5px;top:521px;font-size:11.8px;line-height:14px;color:#323130;letter-spacing:-0.5px;">Season</div>
<svg class="r" style="left:1699px;top:524.5px;" width="12" height="8" viewBox="0 0 12 8"><path d="M0.5 1l5.5 5.5 5.5-5.5" fill="none" stroke="#3b3a39" stroke-width="1"/></svg>
<svg class="r" style="left:1716.5px;top:523.5px;" width="9" height="9" viewBox="0 0 9 9"><path d="M0.5 0.5l8 8M8.5 0.5l-8 8" fill="none" stroke="#3b3a39" stroke-width="1"/></svg>
<div class="r" style="left:1566px;top:541px;width:164px;height:23px;background:#edebe9;border:1px solid #cdcbc9;box-sizing:border-box;border-radius:2px;"></div>
<div class="t" style="left:1571.5px;top:546px;font-size:11.8px;line-height:14px;color:#323130;letter-spacing:-0.075px;">DayName</div>
<svg class="r" style="left:1699px;top:549.5px;" width="12" height="8" viewBox="0 0 12 8"><path d="M0.5 1l5.5 5.5 5.5-5.5" fill="none" stroke="#3b3a39" stroke-width="1"/></svg>
<svg class="r" style="left:1716.5px;top:548.5px;" width="9" height="9" viewBox="0 0 9 9"><path d="M0.5 0.5l8 8M8.5 0.5l-8 8" fill="none" stroke="#3b3a39" stroke-width="1"/></svg>
<div class="r" style="left:1566px;top:566px;width:164px;height:23px;background:#edebe9;border:1px solid #cdcbc9;box-sizing:border-box;border-radius:2px;"></div>
<div class="t" style="left:1571.5px;top:571px;font-size:11.8px;line-height:14px;color:#323130;letter-spacing:0.465px;">Hour</div>
<svg class="r" style="left:1699px;top:574.5px;" width="12" height="8" viewBox="0 0 12 8"><path d="M0.5 1l5.5 5.5 5.5-5.5" fill="none" stroke="#3b3a39" stroke-width="1"/></svg>
<svg class="r" style="left:1716.5px;top:573.5px;" width="9" height="9" viewBox="0 0 9 9"><path d="M0.5 0.5l8 8M8.5 0.5l-8 8" fill="none" stroke="#3b3a39" stroke-width="1"/></svg>
<div class="t" style="left:1571.2px;top:611px;font-size:11.8px;line-height:14px;color:#323130;letter-spacing:-0.077px;">Y-axis</div>
<svg class="r" style="left:1563px;top:631px;" width="170" height="30" viewBox="0 0 170 30"><rect x="0.5" y="0.5" width="169" height="29" fill="#ffffff" stroke="#c6c4c2" stroke-width="1" stroke-dasharray="3 2"/></svg>
<div class="r" style="left:1566px;top:635px;width:164px;height:23px;background:#edebe9;border:1px solid #cdcbc9;box-sizing:border-box;border-radius:2px;"></div>
<div class="t" style="left:1571.5px;top:640px;font-size:11.8px;line-height:14px;color:#323130;letter-spacing:0.079px;">Count of ride_id</div>
<svg class="r" style="left:1699px;top:643.5px;" width="12" height="8" viewBox="0 0 12 8"><path d="M0.5 1l5.5 5.5 5.5-5.5" fill="none" stroke="#3b3a39" stroke-width="1"/></svg>
<svg class="r" style="left:1716.5px;top:642.5px;" width="9" height="9" viewBox="0 0 9 9"><path d="M0.5 0.5l8 8M8.5 0.5l-8 8" fill="none" stroke="#3b3a39" stroke-width="1"/></svg>
<div class="t" style="left:1571.2px;top:673px;font-size:11.8px;line-height:14px;color:#323130;letter-spacing:-0.167px;">Secondary y-axis</div>
<svg class="r" style="left:1563px;top:693px;" width="170" height="28" viewBox="0 0 170 28"><rect x="0.5" y="0.5" width="169" height="27" fill="#ffffff" stroke="#c6c4c2" stroke-width="1" stroke-dasharray="3 2"/></svg>
<div class="t" style="left:1574.4px;top:701px;font-size:11.8px;line-height:14px;color:#323130;letter-spacing:0.055px;">Add data fields here</div>
<div class="t" style="left:1571.2px;top:733px;font-size:11.8px;line-height:14px;color:#323130;letter-spacing:-0.171px;">Legend</div>
<svg class="r" style="left:1563px;top:753px;" width="170" height="30" viewBox="0 0 170 30"><rect x="0.5" y="0.5" width="169" height="29" fill="#ffffff" stroke="#c6c4c2" stroke-width="1" stroke-dasharray="3 2"/></svg>
<div class="r" style="left:1566px;top:757px;width:164px;height:23px;background:#edebe9;border:1px solid #cdcbc9;box-sizing:border-box;border-radius:2px;"></div>
<div class="t" style="left:1571.5px;top:762px;font-size:11.8px;line-height:14px;color:#323130;letter-spacing:-0.03px;">rideable_type</div>
<svg class="r" style="left:1699px;top:765.5px;" width="12" height="8" viewBox="0 0 12 8"><path d="M0.5 1l5.5 5.5 5.5-5.5" fill="none" stroke="#3b3a39" stroke-width="1"/></svg>
<svg class="r" style="left:1716.5px;top:764.5px;" width="9" height="9" viewBox="0 0 9 9"><path d="M0.5 0.5l8 8M8.5 0.5l-8 8" fill="none" stroke="#3b3a39" stroke-width="1"/></svg>
<div class="t" style="left:1571.2px;top:795px;font-size:11.8px;line-height:14px;color:#323130;letter-spacing:0.046px;">Small multiples</div>
<svg class="r" style="left:1563px;top:815px;" width="170" height="28" viewBox="0 0 170 28"><rect x="0.5" y="0.5" width="169" height="27" fill="#ffffff" stroke="#c6c4c2" stroke-width="1" stroke-dasharray="3 2"/></svg>
<div class="t" style="left:1574.4px;top:823px;font-size:11.8px;line-height:14px;color:#323130;letter-spacing:0.055px;">Add data fields here</div>
<div class="t" style="left:1571.2px;top:855px;font-size:11.8px;line-height:14px;color:#323130;letter-spacing:0.143px;">Tooltips</div>
<svg class="r" style="left:1563px;top:875px;" width="170" height="28" viewBox="0 0 170 28"><rect x="0.5" y="0.5" width="169" height="27" fill="#ffffff" stroke="#c6c4c2" stroke-width="1" stroke-dasharray="3 2"/></svg>
<div class="t" style="left:1574.4px;top:883px;font-size:11.8px;line-height:14px;color:#323130;letter-spacing:0.055px;">Add data fields here</div>
<div class="t" style="left:1571.2px;top:915px;font-size:11.8px;line-height:14px;color:#323130;letter-spacing:0.491px;-webkit-text-stroke:0.4px #323130;">Drill through</div>
<div class="t" style="left:1571.2px;top:940px;font-size:11.8px;line-height:14px;color:#323130;letter-spacing:0.041px;">Cross-report</div>
<div class="r" style="left:1685px;top:939px;width:32px;height:16px;background:#f3f2f1;border:1px solid #605e5c;box-sizing:border-box;border-radius:8px;"></div>
<div class="r" style="left:1689.5px;top:943px;width:8px;height:8px;background:#605e5c;border-radius:50%;"></div>
<div class="t" style="left:1699.9px;top:942px;font-size:9.5px;line-height:11px;color:#605e5c;letter-spacing:-0.27px;">Off</div>
<div class="t" style="left:1571.2px;top:967px;font-size:11.8px;line-height:14px;color:#323130;letter-spacing:-0.04px;">Keep all filters</div>
<div class="r" style="left:1685px;top:966px;width:32px;height:16px;background:#117865;border-radius:8px;"></div>
<div class="r" style="left:1705px;top:970px;width:8.5px;height:8.5px;background:#ffffff;border-radius:50%;"></div>
<div class="t" style="left:1689px;top:969px;font-size:9.5px;line-height:11px;color:#ffffff;transform:scaleX(0.9239);transform-origin:0px 0;font-weight:700;">On</div>
<svg class="r" style="left:1563px;top:992px;" width="170" height="26" viewBox="0 0 170 26"><rect x="0.5" y="0.5" width="169" height="25" fill="#ffffff" stroke="#c6c4c2" stroke-width="1" stroke-dasharray="3 2"/></svg>
<div class="t" style="left:1572.1px;top:999px;font-size:11.8px;line-height:14px;color:#323130;letter-spacing:0.21px;">Add drill-through fields here</div>
<div class="r" style="left:1740px;top:112px;width:181px;height:920px;background:#f3f2f1;"></div>
<div class="r" style="left:1739.5px;top:112px;width:1px;height:920px;background:#d2d0ce;"></div>
<div class="t" style="left:1749px;top:121px;font-size:16px;line-height:17px;color:#323130;letter-spacing:-0.413px;-webkit-text-stroke:0.4px #323130;">Data</div>
<svg class="r" style="left:1898.5px;top:122px;" width="14" height="14" viewBox="0 0 14 14"><path d="M1.5 1.5l5.5 5.5-5.5 5.5M7 1.5l5.5 5.5-5.5 5.5" fill="none" stroke="#252423" stroke-width="1.2"/></svg>
<div class="r" style="left:1744.5px;top:155.5px;width:171px;height:26px;background:#f3f2f1;border:1px solid #605e5c;box-sizing:border-box;border-radius:2px;"></div>
<svg class="r" style="left:1751px;top:160px;" width="18" height="18" viewBox="0 0 18 18"><circle cx="10.5" cy="6.5" r="4.5" fill="none" stroke="#3b3a39" stroke-width="1.1"/><path d="M7.3 9.7l-5 5" stroke="#3b3a39" stroke-width="1.1"/></svg>
<div class="t" style="left:1773.7px;top:162px;font-size:13.6px;line-height:15px;color:#323130;letter-spacing:-0.562px;">Search</div>
<svg class="r" style="left:1746.7px;top:199.5px;" width="12" height="8" viewBox="0 0 12 8"><path d="M1 1.5l5 5 5-5" fill="none" stroke="#605e5c" stroke-width="1.1"/></svg>
<svg class="r" style="left:1761.8px;top:196.5px;" width="14" height="14" viewBox="0 0 14 14"><rect x="1.5" y="1.5" width="11" height="11" rx="2" fill="none" stroke="#3b3a39" stroke-width="1.1"/><path d="M1.5 5h11M1.5 9h11M5 1.5v11M9 1.5v11" stroke="#3b3a39" stroke-width="1"/></svg>
<div class="t" style="left:1781.9px;top:197px;font-size:11.8px;line-height:14px;color:#323130;letter-spacing:-0.289px;">Divvy_Stations</div>
<div class="r" style="left:1778px;top:221.5px;width:12px;height:12px;background:#ffffff;border:1px solid #8a8886;box-sizing:border-box;border-radius:2px;"></div>
<div class="t" style="left:1816.6px;top:221px;font-size:11.8px;line-height:14px;color:#323130;letter-spacing:-0.012px;">dpcapacity</div>
<div class="r" style="left:1778px;top:245.5px;width:12px;height:12px;background:#ffffff;border:1px solid #8a8886;box-sizing:border-box;border-radius:2px;"></div>
<div class="t" style="left:1816.6px;top:245px;font-size:11.8px;line-height:14px;color:#323130;letter-spacing:-0.204px;">id</div>
<div class="r" style="left:1778px;top:269.5px;width:12px;height:12px;background:#ffffff;border:1px solid #8a8886;box-sizing:border-box;border-radius:2px;"></div>
<div class="t" style="left:1816.6px;top:269px;font-size:11.8px;line-height:14px;color:#323130;letter-spacing:0.192px;">latitude</div>
<div class="r" style="left:1778px;top:293.5px;width:12px;height:12px;background:#ffffff;border:1px solid #8a8886;box-sizing:border-box;border-radius:2px;"></div>
<div class="t" style="left:1816.6px;top:293px;font-size:11.8px;line-height:14px;color:#323130;letter-spacing:0.236px;">longitude</div>
<div class="r" style="left:1778px;top:317.5px;width:12px;height:12px;background:#ffffff;border:1px solid #8a8886;box-sizing:border-box;border-radius:2px;"></div>
<div class="t" style="left:1816.6px;top:317px;font-size:11.8px;line-height:14px;color:#323130;letter-spacing:-0.3px;">name</div>
<svg class="r" style="left:1746.7px;top:343.5px;" width="12" height="8" viewBox="0 0 12 8"><path d="M1 1.5l5 5 5-5" fill="none" stroke="#605e5c" stroke-width="1.1"/></svg>
<svg class="r" style="left:1761.8px;top:340.5px;" width="14" height="14" viewBox="0 0 14 14"><rect x="1.5" y="1.5" width="11" height="11" rx="2" fill="none" stroke="#3b3a39" stroke-width="1.1"/><path d="M1.5 5h11M1.5 9h11M5 1.5v11M9 1.5v11" stroke="#3b3a39" stroke-width="1"/></svg>
<div class="r" style="left:1769.5px;top:347.5px;width:10px;height:10px;background:#117865;border-radius:50%;"></div>
<svg class="r" style="left:1769.5px;top:347.5px;" width="10" height="10" viewBox="0 0 10 10"><path d="M2.8 5.2l1.7 1.7 3-3.4" fill="none" stroke="#fff" stroke-width="1.1"/></svg>
<div class="t" style="left:1781.9px;top:341px;font-size:11.8px;line-height:14px;color:#323130;letter-spacing:-0.477px;">Divvy_Trips_2k</div>
<div class="r" style="left:1778px;top:365.5px;width:12px;height:12px;background:#117865;border-radius:2px;"></div>
<svg class="r" style="left:1778px;top:365.5px;" width="12" height="12" viewBox="0 0 12 12"><path d="M2.5 6.2l2.5 2.5 4.5-5" fill="none" stroke="#fff" stroke-width="1.3"/></svg>
<svg class="r" style="left:1796.3px;top:363.5px;" width="18" height="17" viewBox="0 0 18 17"><path d="M8 13.5h-4.5a1.5 1.5 0 0 1-1.5-1.5v-8.5a1.5 1.5 0 0 1 1.5-1.5h7.5a1.5 1.5 0 0 1 1.5 1.5v5M2 5.5h10.5M5.5 5.5v8M9 5.5v3M2 9h6" fill="none" stroke="#3b3a39" stroke-width="1.1"/><path d="M11.5 9.5c-1.5 0-1.5 1-1.5 2v3c0 1-0.5 1.5-1.5 1.5M8.5 12h3" fill="none" stroke="#3b3a39" stroke-width="1.1"/><path d="M12.5 12.5l3.5 3.5M16 12.5l-3.5 3.5" stroke="#3b3a39" stroke-width="1.3"/></svg>
<div class="t" style="left:1816.6px;top:365px;font-size:11.8px;line-height:14px;color:#323130;letter-spacing:-0.242px;">DayName</div>
<div class="r" style="left:1778px;top:389.5px;width:12px;height:12px;background:#ffffff;border:1px solid #8a8886;box-sizing:border-box;border-radius:2px;"></div>
<div class="t" style="left:1816.6px;top:389px;font-size:11.8px;line-height:14px;color:#323130;letter-spacing:-0.166px;">end_station_id</div>
<div class="r" style="left:1778px;top:413.5px;width:12px;height:12px;background:#ffffff;border:1px solid #8a8886;box-sizing:border-box;border-radius:2px;"></div>
<div class="t" style="left:1816.6px;top:413px;font-size:11.8px;line-height:14px;color:#323130;letter-spacing:-0.161px;">end_station_name</div>
<div class="r" style="left:1778px;top:437.5px;width:12px;height:12px;background:#ffffff;border:1px solid #8a8886;box-sizing:border-box;border-radius:2px;"></div>
<svg class="r" style="left:1763px;top:437.5px;" width="8" height="12" viewBox="0 0 8 12"><path d="M1.5 1l5 5-5 5" fill="none" stroke="#605e5c" stroke-width="1.1"/></svg>
<svg class="r" style="left:1797.3px;top:436.5px;" width="14" height="14" viewBox="0 0 14 14"><rect x="1.5" y="1.5" width="11" height="11" rx="2" fill="none" stroke="#3b3a39" stroke-width="1.1"/><path d="M1.5 4.5h11" stroke="#3b3a39" stroke-width="1"/><g fill="#3b3a39"><rect x="3.5" y="6.5" width="1.5" height="1.5"/><rect x="6.3" y="6.5" width="1.5" height="1.5"/><rect x="9" y="6.5" width="1.5" height="1.5"/><rect x="3.5" y="9.3" width="1.5" height="1.5"/><rect x="6.3" y="9.3" width="1.5" height="1.5"/></g></svg>
<div class="t" style="left:1816.6px;top:437px;font-size:11.8px;line-height:14px;color:#323130;letter-spacing:-0.258px;">ended_at</div>
<div class="r" style="left:1778px;top:461.5px;width:12px;height:12px;background:#117865;border-radius:2px;"></div>
<svg class="r" style="left:1778px;top:461.5px;" width="12" height="12" viewBox="0 0 12 12"><path d="M2.5 6.2l2.5 2.5 4.5-5" fill="none" stroke="#fff" stroke-width="1.3"/></svg>
<svg class="r" style="left:1796.3px;top:459.5px;" width="18" height="17" viewBox="0 0 18 17"><path d="M8 13.5h-4.5a1.5 1.5 0 0 1-1.5-1.5v-8.5a1.5 1.5 0 0 1 1.5-1.5h7.5a1.5 1.5 0 0 1 1.5 1.5v5M2 5.5h10.5M5.5 5.5v8M9 5.5v3M2 9h6" fill="none" stroke="#3b3a39" stroke-width="1.1"/><path d="M11.5 9.5c-1.5 0-1.5 1-1.5 2v3c0 1-0.5 1.5-1.5 1.5M8.5 12h3" fill="none" stroke="#3b3a39" stroke-width="1.1"/><path d="M12.5 12.5l3.5 3.5M16 12.5l-3.5 3.5" stroke="#3b3a39" stroke-width="1.3"/></svg>
<div class="t" style="left:1816.6px;top:461px;font-size:11.8px;line-height:14px;color:#323130;letter-spacing:-0.002px;">Hour</div>
<div class="r" style="left:1778px;top:485.5px;width:12px;height:12px;background:#ffffff;border:1px solid #8a8886;box-sizing:border-box;border-radius:2px;"></div>
<div class="t" style="left:1816.6px;top:485px;font-size:11.8px;line-height:14px;color:#323130;letter-spacing:-0.246px;">member_casual</div>
<div class="r" style="left:1778px;top:509.5px;width:12px;height:12px;background:#117865;border-radius:2px;"></div>
<svg class="r" style="left:1778px;top:509.5px;" width="12" height="12" viewBox="0 0 12 12"><path d="M2.5 6.2l2.5 2.5 4.5-5" fill="none" stroke="#fff" stroke-width="1.3"/></svg>
<div class="t" style="left:1816.6px;top:509px;font-size:11.8px;line-height:14px;color:#323130;letter-spacing:-0.167px;">ride_id</div>
<div class="r" style="left:1778px;top:533.5px;width:12px;height:12px;background:#117865;border-radius:2px;"></div>
<svg class="r" style="left:1778px;top:533.5px;" width="12" height="12" viewBox="0 0 12 12"><path d="M2.5 6.2l2.5 2.5 4.5-5" fill="none" stroke="#fff" stroke-width="1.3"/></svg>
<div class="t" style="left:1816.6px;top:533px;font-size:11.8px;line-height:14px;color:#323130;letter-spacing:-0.072px;">rideable_type</div>
<div class="r" style="left:1778px;top:557.5px;width:12px;height:12px;background:#117865;border-radius:2px;"></div>
<svg class="r" style="left:1778px;top:557.5px;" width="12" height="12" viewBox="0 0 12 12"><path d="M2.5 6.2l2.5 2.5 4.5-5" fill="none" stroke="#fff" stroke-width="1.3"/></svg>
<svg class="r" style="left:1796.3px;top:555.5px;" width="18" height="17" viewBox="0 0 18 17"><path d="M8 13.5h-4.5a1.5 1.5 0 0 1-1.5-1.5v-8.5a1.5 1.5 0 0 1 1.5-1.5h7.5a1.5 1.5 0 0 1 1.5 1.5v5M2 5.5h10.5M5.5 5.5v8M9 5.5v3M2 9h6" fill="none" stroke="#3b3a39" stroke-width="1.1"/><path d="M11.5 9.5c-1.5 0-1.5 1-1.5 2v3c0 1-0.5 1.5-1.5 1.5M8.5 12h3" fill="none" stroke="#3b3a39" stroke-width="1.1"/><path d="M12.5 12.5l3.5 3.5M16 12.5l-3.5 3.5" stroke="#3b3a39" stroke-width="1.3"/></svg>
<div class="t" style="left:1816.6px;top:557px;font-size:11.8px;line-height:14px;color:#323130;letter-spacing:-0.72px;">Season</div>
<div class="r" style="left:1778px;top:581.5px;width:12px;height:12px;background:#ffffff;border:1px solid #8a8886;box-sizing:border-box;border-radius:2px;"></div>
<div class="t" style="left:1816.6px;top:581px;font-size:11.8px;line-height:14px;color:#323130;letter-spacing:-0.087px;">start_station_id</div>
<div class="r" style="left:1778px;top:605.5px;width:12px;height:12px;background:#ffffff;border:1px solid #8a8886;box-sizing:border-box;border-radius:2px;"></div>
<div class="t" style="left:1816.6px;top:605px;font-size:11.8px;line-height:14px;color:#323130;letter-spacing:-0.223px;">start_station_na...</div>
<div class="r" style="left:1778px;top:629.5px;width:12px;height:12px;background:#117865;border-radius:2px;"></div>
<svg class="r" style="left:1778px;top:629.5px;" width="12" height="12" viewBox="0 0 12 12"><path d="M2.5 6.2l2.5 2.5 4.5-5" fill="none" stroke="#fff" stroke-width="1.3"/></svg>
<svg class="r" style="left:1763px;top:629.5px;" width="8" height="12" viewBox="0 0 8 12"><path d="M1.5 1l5 5-5 5" fill="none" stroke="#605e5c" stroke-width="1.1"/></svg>
<svg class="r" style="left:1797.3px;top:628.5px;" width="14" height="14" viewBox="0 0 14 14"><rect x="1.5" y="1.5" width="11" height="11" rx="2" fill="none" stroke="#3b3a39" stroke-width="1.1"/><path d="M1.5 4.5h11" stroke="#3b3a39" stroke-width="1"/><g fill="#3b3a39"><rect x="3.5" y="6.5" width="1.5" height="1.5"/><rect x="6.3" y="6.5" width="1.5" height="1.5"/><rect x="9" y="6.5" width="1.5" height="1.5"/><rect x="3.5" y="9.3" width="1.5" height="1.5"/><rect x="6.3" y="9.3" width="1.5" height="1.5"/></g></svg>
<div class="r" style="left:1804.5px;top:636px;width:10px;height:10px;background:#117865;border-radius:50%;"></div>
<svg class="r" style="left:1804.5px;top:636px;" width="10" height="10" viewBox="0 0 10 10"><path d="M2.8 5.2l1.7 1.7 3-3.4" fill="none" stroke="#fff" stroke-width="1.1"/></svg>
<div class="t" style="left:1816.6px;top:629px;font-size:11.8px;line-height:14px;color:#323130;letter-spacing:-0.161px;">started_at</div>
<div class="r" style="left:1778px;top:653.5px;width:12px;height:12px;background:#ffffff;border:1px solid #8a8886;box-sizing:border-box;border-radius:2px;"></div>
<svg class="r" style="left:1796.3px;top:651.5px;" width="18" height="17" viewBox="0 0 18 17"><path d="M7 13.5h-3.5a1.5 1.5 0 0 1-1.5-1.5v-8.5a1.5 1.5 0 0 1 1.5-1.5h7.5a1.5 1.5 0 0 1 1.5 1.5v3.5M2 5.5h10.5M5.5 5.5v8M2 9h5" fill="none" stroke="#3b3a39" stroke-width="1.1"/><path d="M15.5 10v-1h-6.5l3.3 3.5-3.3 3.5h6.5v-1" fill="none" stroke="#3b3a39" stroke-width="1.2"/></svg>
<div class="t" style="left:1816.6px;top:653px;font-size:11.8px;line-height:14px;color:#323130;letter-spacing:0.116px;">trip_duration</div>
<div class="r" style="left:1778px;top:677.5px;width:12px;height:12px;background:#ffffff;border:1px solid #8a8886;box-sizing:border-box;border-radius:2px;"></div>
<svg class="r" style="left:1796.3px;top:675.5px;" width="18" height="17" viewBox="0 0 18 17"><path d="M7 13.5h-3.5a1.5 1.5 0 0 1-1.5-1.5v-8.5a1.5 1.5 0 0 1 1.5-1.5h7.5a1.5 1.5 0 0 1 1.5 1.5v3.5M2 5.5h10.5M5.5 5.5v8M2 9h5" fill="none" stroke="#3b3a39" stroke-width="1.1"/><path d="M15.5 10v-1h-6.5l3.3 3.5-3.3 3.5h6.5v-1" fill="none" stroke="#3b3a39" stroke-width="1.2"/></svg>
<div class="t" style="left:1816.6px;top:677px;font-size:11.8px;line-height:14px;color:#323130;letter-spacing:-0.32px;">WeekDay</div>
</body></html>
